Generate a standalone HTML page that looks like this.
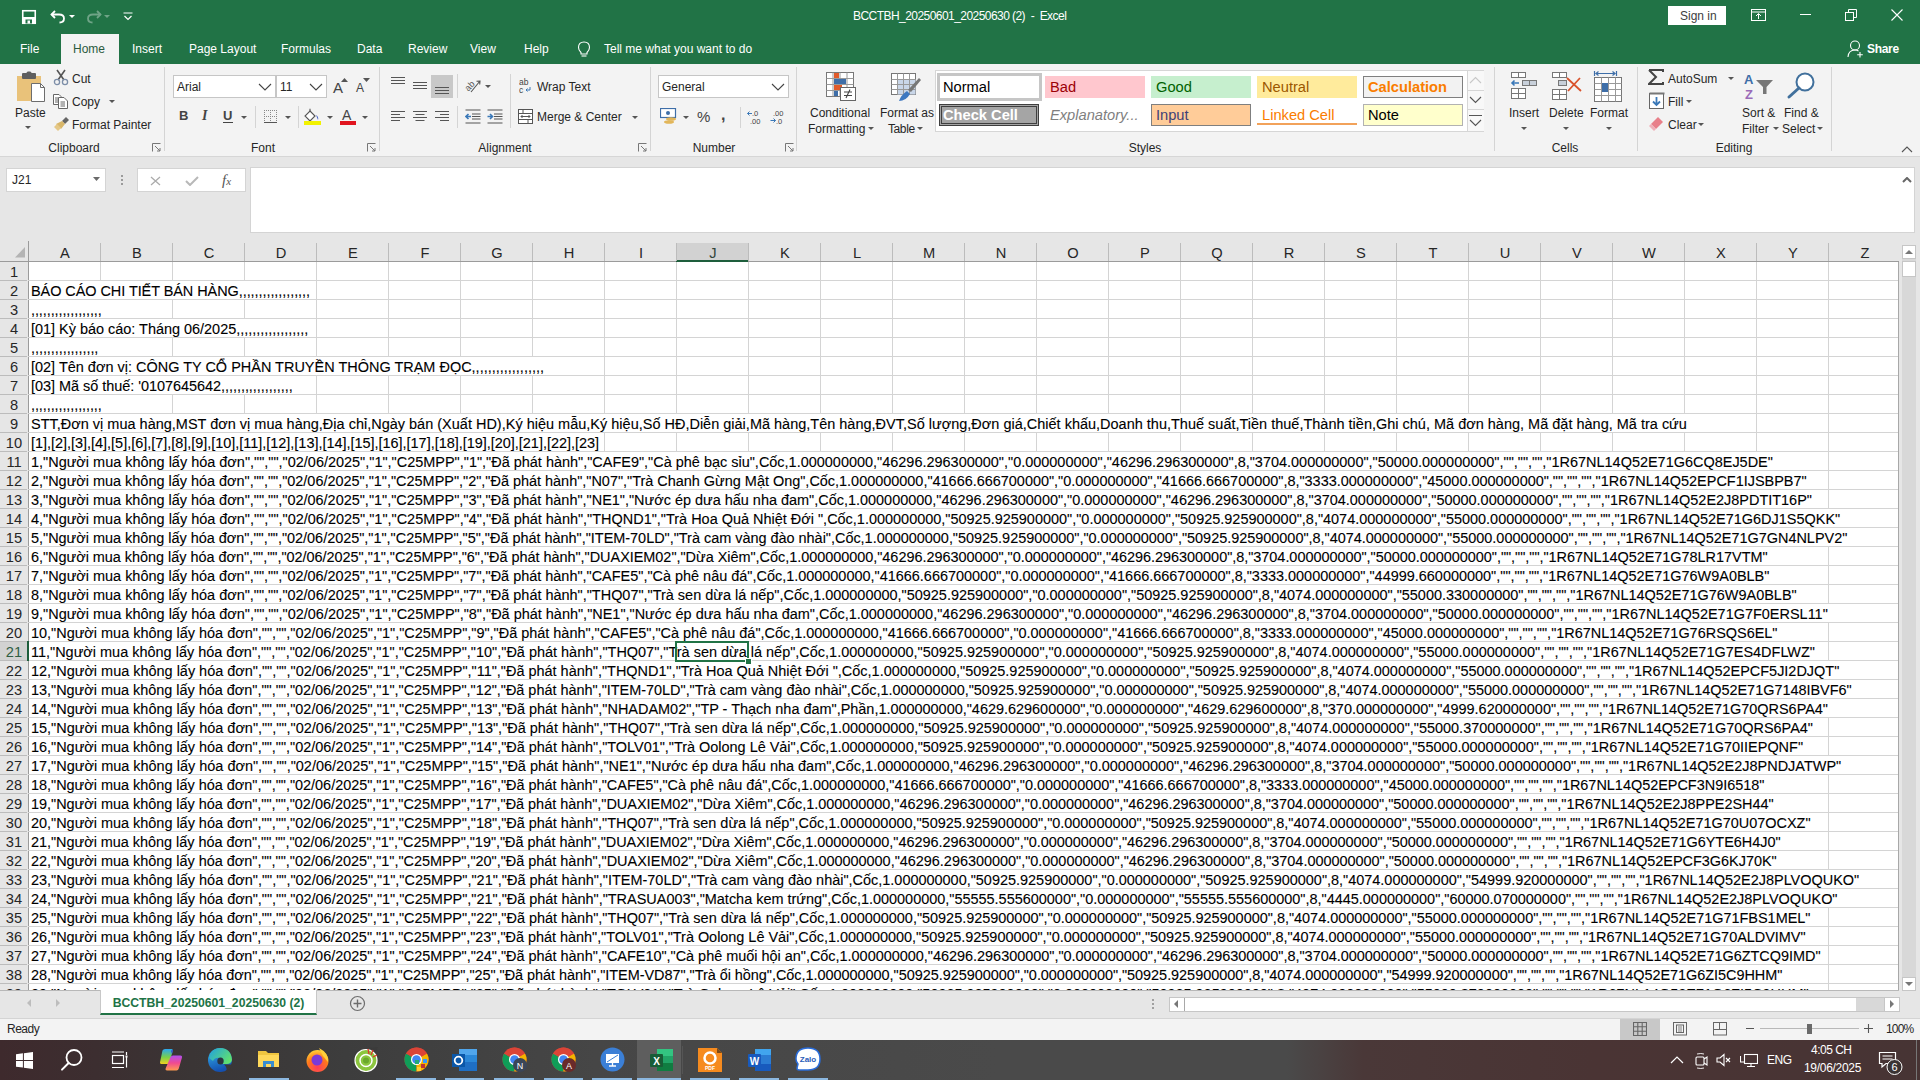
<!DOCTYPE html>
<html><head><meta charset="utf-8"><style>
html,body{margin:0;padding:0}
body{width:1920px;height:1080px;overflow:hidden;position:relative;font-family:"Liberation Sans",sans-serif;background:#fff}
.rt{-webkit-text-stroke:0.1px #000}
</style></head><body>
<div style="position:absolute;left:0px;top:0px;width:1920px;height:64px;background:#217346"></div>
<div style="position:absolute;left:853px;top:9px;white-space:pre;color:#fff;font-size:12px;line-height:14px;letter-spacing:-0.55px">BCCTBH_20250601_20250630 (2)  -  Excel</div>
<div style="position:absolute;left:20px;top:42px;white-space:pre;color:#fff;font-size:12px;line-height:14px">File</div>
<div style="position:absolute;left:132px;top:42px;white-space:pre;color:#fff;font-size:12px;line-height:14px">Insert</div>
<div style="position:absolute;left:189px;top:42px;white-space:pre;color:#fff;font-size:12px;line-height:14px">Page Layout</div>
<div style="position:absolute;left:281px;top:42px;white-space:pre;color:#fff;font-size:12px;line-height:14px">Formulas</div>
<div style="position:absolute;left:357px;top:42px;white-space:pre;color:#fff;font-size:12px;line-height:14px">Data</div>
<div style="position:absolute;left:408px;top:42px;white-space:pre;color:#fff;font-size:12px;line-height:14px">Review</div>
<div style="position:absolute;left:470px;top:42px;white-space:pre;color:#fff;font-size:12px;line-height:14px">View</div>
<div style="position:absolute;left:524px;top:42px;white-space:pre;color:#fff;font-size:12px;line-height:14px">Help</div>
<div style="position:absolute;left:61px;top:34px;width:58px;height:30px;background:#f3f3f3"></div>
<div style="position:absolute;left:73px;top:42px;white-space:pre;color:#2b5a3e;font-size:12px;line-height:14px">Home</div>
<div style="position:absolute;left:604px;top:42px;white-space:pre;color:#fff;font-size:12px;line-height:14px">Tell me what you want to do</div>
<div style="position:absolute;left:1867px;top:42px;white-space:pre;color:#fff;font-size:12px;line-height:14px;font-weight:bold;letter-spacing:-0.3px">Share</div>
<div style="position:absolute;left:1668px;top:6px;width:58px;height:19px;background:#fff"></div>
<div style="position:absolute;left:1680px;top:9px;white-space:pre;color:#404040;font-size:12px;line-height:14px">Sign in</div>
<svg style="position:absolute;left:21px;top:9px;" width="16" height="16" viewBox="0 0 16 16"><rect x="1.75" y="1.75" width="12.5" height="12.5" fill="none" stroke="#fff" stroke-width="1.6"/><rect x="1.5" y="8" width="13" height="6.5" fill="#fff"/><rect x="4.5" y="10.5" width="6.5" height="4" fill="#217346"/><rect x="6.5" y="11.5" width="2.5" height="3" fill="#fff"/></svg>
<svg style="position:absolute;left:50px;top:9px;" width="16" height="15" viewBox="0 0 16 15"><path d="M5 2 L1.5 5.5 L5 9" stroke="#fff" stroke-width="1.8" fill="none"/><path d="M1.5 5.5 H9 Q14 5.5 14 9.5 Q14 13.5 9.5 13.5" stroke="#fff" stroke-width="1.8" fill="none"/></svg>
<svg style="position:absolute;left:69px;top:15px;" width="7" height="4" viewBox="0 0 7 4"><path d="M0 0 H6 L3 3 Z" fill="#fff"/></svg>
<svg style="position:absolute;left:86px;top:9px;opacity:0.35" width="16" height="15" viewBox="0 0 16 15"><path d="M11 2 L14.5 5.5 L11 9" stroke="#fff" stroke-width="1.8" fill="none"/><path d="M14.5 5.5 H7 Q2 5.5 2 9.5 Q2 13.5 6.5 13.5" stroke="#fff" stroke-width="1.8" fill="none"/></svg>
<svg style="position:absolute;left:104px;top:15px;opacity:0.35" width="7" height="4" viewBox="0 0 7 4"><path d="M0 0 H6 L3 3 Z" fill="#fff"/></svg>
<svg style="position:absolute;left:123px;top:12px;" width="10" height="9" viewBox="0 0 10 9"><path d="M0.5 1 H9.5" stroke="#fff" stroke-width="1"/><path d="M1.5 4 L5 7.5 L8.5 4" stroke="#fff" stroke-width="1.2" fill="none"/></svg>
<svg style="position:absolute;left:1751px;top:9px;" width="15" height="12" viewBox="0 0 15 12"><rect x="0.5" y="0.5" width="14" height="11" fill="none" stroke="#fff" stroke-width="1"/><path d="M0.5 3 H14.5" stroke="#fff" stroke-width="1"/><path d="M7.5 10 V5 M5 7 L7.5 4.5 L10 7" stroke="#fff" stroke-width="1" fill="none"/></svg>
<div style="position:absolute;left:1800px;top:14px;width:11px;height:1px;background:#fff"></div>
<svg style="position:absolute;left:1845px;top:9px;" width="12" height="12" viewBox="0 0 12 12"><rect x="0.5" y="3.5" width="8" height="8" fill="none" stroke="#fff" stroke-width="1"/><path d="M3.5 3.5 V0.5 H11.5 V8.5 H8.5" stroke="#fff" stroke-width="1" fill="none"/></svg>
<svg style="position:absolute;left:1891px;top:9px;" width="12" height="12" viewBox="0 0 12 12"><path d="M0.5 0.5 L11.5 11.5 M11.5 0.5 L0.5 11.5" stroke="#fff" stroke-width="1.1"/></svg>
<svg style="position:absolute;left:1847px;top:40px;" width="17" height="18" viewBox="0 0 17 18"><circle cx="8" cy="5.5" r="4.5" fill="none" stroke="#fff" stroke-width="1.1"/><path d="M1 17 Q1.5 10 8 10 Q10 10 11.5 11" stroke="#fff" stroke-width="1.1" fill="none"/><path d="M13 12 V17.5 M10.2 14.7 H15.8" stroke="#fff" stroke-width="1.1"/></svg>
<svg style="position:absolute;left:577px;top:41px;" width="14" height="17" viewBox="0 0 14 17"><path d="M7 1 Q12.5 1 12.5 6.5 Q12.5 9 10 11.5 V13 H4 V11.5 Q1.5 9 1.5 6.5 Q1.5 1 7 1 Z" fill="none" stroke="#fff" stroke-width="1.1"/><path d="M4.5 15 H9.5" stroke="#fff" stroke-width="1.1"/></svg>
<div style="position:absolute;left:0px;top:64px;width:1920px;height:93px;background:#f3f3f3;border-bottom:1px solid #d6d6d6;box-sizing:border-box"></div>
<div style="position:absolute;left:14px;top:141px;width:120px;text-align:center;color:#262626;font-size:12px;line-height:14px">Clipboard</div>
<div style="position:absolute;left:203px;top:141px;width:120px;text-align:center;color:#262626;font-size:12px;line-height:14px">Font</div>
<div style="position:absolute;left:445px;top:141px;width:120px;text-align:center;color:#262626;font-size:12px;line-height:14px">Alignment</div>
<div style="position:absolute;left:654px;top:141px;width:120px;text-align:center;color:#262626;font-size:12px;line-height:14px">Number</div>
<div style="position:absolute;left:1085px;top:141px;width:120px;text-align:center;color:#262626;font-size:12px;line-height:14px">Styles</div>
<div style="position:absolute;left:1505px;top:141px;width:120px;text-align:center;color:#262626;font-size:12px;line-height:14px">Cells</div>
<div style="position:absolute;left:1674px;top:141px;width:120px;text-align:center;color:#262626;font-size:12px;line-height:14px">Editing</div>
<div style="position:absolute;left:164px;top:67px;width:1px;height:84px;background:#d4d4d4"></div>
<div style="position:absolute;left:379px;top:67px;width:1px;height:84px;background:#d4d4d4"></div>
<div style="position:absolute;left:650px;top:67px;width:1px;height:84px;background:#d4d4d4"></div>
<div style="position:absolute;left:796px;top:67px;width:1px;height:84px;background:#d4d4d4"></div>
<div style="position:absolute;left:1494px;top:67px;width:1px;height:84px;background:#d4d4d4"></div>
<div style="position:absolute;left:1637px;top:67px;width:1px;height:84px;background:#d4d4d4"></div>
<div style="position:absolute;left:1831px;top:67px;width:1px;height:84px;background:#d4d4d4"></div>
<svg style="position:absolute;left:14px;top:70px;" width="34" height="34" viewBox="0 0 34 34"><rect x="3" y="6" width="24" height="25" fill="#e9c27a"/><rect x="8" y="3" width="14" height="6" rx="1" fill="#5f5f5f"/><rect x="12.5" y="1.5" width="5" height="3" rx="1.5" fill="#5f5f5f"/><path d="M17.5 13.5 H26.5 L30.5 17.5 V31.5 H17.5 Z" fill="#fff" stroke="#6d6d6d" stroke-width="1"/><path d="M26.5 13.5 V17.5 H30.5" fill="none" stroke="#6d6d6d" stroke-width="1"/></svg>
<div style="position:absolute;left:15px;top:106px;white-space:pre;color:#262626;font-size:12px;line-height:14px;font-size:12px">Paste</div>
<svg style="position:absolute;left:25px;top:126px;" width="7" height="4" viewBox="0 0 7 4"><path d="M0 0 H6 L3 3 Z" fill="#555"/></svg>
<svg style="position:absolute;left:53px;top:69px;" width="16" height="17" viewBox="0 0 16 17"><path d="M4 1 L11 11 M12 1 L5 11" stroke="#555" stroke-width="1.6" fill="none"/><circle cx="4" cy="13" r="2.6" fill="none" stroke="#7d8ea8" stroke-width="1.3"/><circle cx="12" cy="13" r="2.6" fill="none" stroke="#7d8ea8" stroke-width="1.3"/></svg>
<div style="position:absolute;left:72px;top:72px;white-space:pre;color:#262626;font-size:12px;line-height:14px">Cut</div>
<svg style="position:absolute;left:52px;top:93px;" width="17" height="16" viewBox="0 0 17 16"><path d="M1.5 1.5 H7 L9 3.5 V11.5 H1.5 Z" fill="#fff" stroke="#666" stroke-width="1"/><path d="M3 5 H6 M3 7 H7 M3 9 H7" stroke="#666" stroke-width="1"/><path d="M6.5 4.5 H12 L15.5 8 V15.5 H6.5 Z" fill="#fff" stroke="#666" stroke-width="1"/><path d="M8.5 9 H13 M8.5 11 H13 M8.5 13 H13" stroke="#666" stroke-width="1"/></svg>
<div style="position:absolute;left:72px;top:95px;white-space:pre;color:#262626;font-size:12px;line-height:14px">Copy</div>
<svg style="position:absolute;left:109px;top:100px;" width="7" height="4" viewBox="0 0 7 4"><path d="M0 0 H6 L3 3 Z" fill="#555"/></svg>
<svg style="position:absolute;left:53px;top:116px;" width="17" height="15" viewBox="0 0 17 15"><path d="M9 5 L13 1 L16 4 L12 8 Z" fill="#666"/><path d="M3 8 L9 5 L12 8 L8 13 Z" fill="#d9b76a"/><path d="M1 11 L4 8 L8 12 L5 15 Z" fill="#e5c887"/></svg>
<div style="position:absolute;left:72px;top:118px;white-space:pre;color:#262626;font-size:12px;line-height:14px">Format Painter</div>
<svg style="position:absolute;left:152px;top:143px;" width="9" height="9" viewBox="0 0 9 9"><path d="M0.5 0.5 H8.5 M0.5 0.5 V8.5" stroke="#777" stroke-width="1" fill="none"/><path d="M3 3 L8 8 M8 5 V8 H5" stroke="#777" stroke-width="1" fill="none"/></svg>
<div style="position:absolute;left:173px;top:75px;width:103px;height:23px;background:#fff;border:1px solid #c6c6c6;box-sizing:border-box"></div>
<div style="position:absolute;left:276px;top:75px;width:51px;height:23px;background:#fff;border:1px solid #c6c6c6;box-sizing:border-box"></div>
<div style="position:absolute;left:177px;top:80px;white-space:pre;color:#262626;font-size:12px;line-height:15px">Arial</div>
<div style="position:absolute;left:280px;top:80px;white-space:pre;color:#262626;font-size:12px;line-height:15px">11</div>
<svg style="position:absolute;left:258px;top:83px;" width="14" height="9" viewBox="0 0 14 9"><path d="M1 1 L7 7 L13 1" stroke="#444" stroke-width="1.1" fill="none"/></svg>
<svg style="position:absolute;left:309px;top:83px;" width="14" height="9" viewBox="0 0 14 9"><path d="M1 1 L7 7 L13 1" stroke="#444" stroke-width="1.1" fill="none"/></svg>
<div style="position:absolute;left:333px;top:80px;white-space:pre;color:#444;font-size:15px;line-height:15px">A</div>
<svg style="position:absolute;left:341px;top:78px;" width="7" height="4" viewBox="0 0 7 4"><path d="M0 4 L3.5 0 L7 4 Z" fill="#555"/></svg>
<div style="position:absolute;left:356px;top:82px;white-space:pre;color:#444;font-size:12px;line-height:13px">A</div>
<svg style="position:absolute;left:363px;top:78px;" width="7" height="4" viewBox="0 0 7 4"><path d="M0 0 L7 0 L3.5 4 Z" fill="#555"/></svg>
<div style="position:absolute;left:179px;top:108px;white-space:pre;color:#444;font-size:13px;font-weight:bold;line-height:15px">B</div>
<div style="position:absolute;left:202px;top:108px;white-space:pre;color:#444;font-size:14px;font-style:italic;font-family:Liberation Serif;font-weight:bold;line-height:15px">I</div>
<div style="position:absolute;left:223px;top:108px;white-space:pre;color:#444;font-size:13px;font-weight:bold;line-height:15px">U</div>
<div style="position:absolute;left:223px;top:122px;width:10px;height:1px;background:#444"></div>
<svg style="position:absolute;left:241px;top:116px;" width="7" height="4" viewBox="0 0 7 4"><path d="M0 0 H6 L3 3 Z" fill="#555"/></svg>
<div style="position:absolute;left:255px;top:106px;width:1px;height:22px;background:#d4d4d4"></div>
<svg style="position:absolute;left:264px;top:110px;" width="13" height="13" viewBox="0 0 13 13"><path d="M0 0.5 H13 M0.5 0 V13 M12.5 0 V13 M6.5 0 V13 M0 6.5 H13" stroke="#888" stroke-width="1" stroke-dasharray="1 1" fill="none"/><path d="M0 12.5 H13" stroke="#555" stroke-width="1"/></svg>
<svg style="position:absolute;left:285px;top:116px;" width="7" height="4" viewBox="0 0 7 4"><path d="M0 0 H6 L3 3 Z" fill="#555"/></svg>
<div style="position:absolute;left:298px;top:106px;width:1px;height:22px;background:#d4d4d4"></div>
<svg style="position:absolute;left:304px;top:108px;" width="19" height="17" viewBox="0 0 19 17"><path d="M6 3 L11 8 L6 13 L1 8 Z" fill="#fff" stroke="#555" stroke-width="1.1"/><path d="M6 3 V0.8" stroke="#555" stroke-width="1.1"/><path d="M12 7 Q15 9 14 12 Z" fill="#4a64c8"/><rect x="0" y="13" width="17" height="4" fill="#f2f200"/></svg>
<svg style="position:absolute;left:327px;top:116px;" width="7" height="4" viewBox="0 0 7 4"><path d="M0 0 H6 L3 3 Z" fill="#555"/></svg>
<div style="position:absolute;left:342px;top:108px;white-space:pre;color:#444;font-size:14px;line-height:14px">A</div>
<div style="position:absolute;left:340px;top:121px;width:16px;height:4px;background:#e0141e"></div>
<svg style="position:absolute;left:362px;top:116px;" width="7" height="4" viewBox="0 0 7 4"><path d="M0 0 H6 L3 3 Z" fill="#555"/></svg>
<svg style="position:absolute;left:367px;top:143px;" width="9" height="9" viewBox="0 0 9 9"><path d="M0.5 0.5 H8.5 M0.5 0.5 V8.5" stroke="#777" stroke-width="1" fill="none"/><path d="M3 3 L8 8 M8 5 V8 H5" stroke="#777" stroke-width="1" fill="none"/></svg>
<svg style="position:absolute;left:391px;top:77px;" width="14" height="11" viewBox="0 0 14 11"><path d="M0 0.5 H14" stroke="#555" stroke-width="1"/><path d="M0 3.5 H14" stroke="#555" stroke-width="1"/><path d="M0 6.5 H14" stroke="#555" stroke-width="1"/></svg>
<svg style="position:absolute;left:413px;top:82px;" width="14" height="11" viewBox="0 0 14 11"><path d="M0 0.5 H14" stroke="#555" stroke-width="1"/><path d="M0 3.5 H14" stroke="#555" stroke-width="1"/><path d="M0 6.5 H14" stroke="#555" stroke-width="1"/></svg>
<div style="position:absolute;left:431px;top:75px;width:22px;height:23px;background:#c8c8c8"></div>
<svg style="position:absolute;left:435px;top:87px;" width="14" height="11" viewBox="0 0 14 11"><path d="M0 0.5 H14" stroke="#555" stroke-width="1"/><path d="M0 3.5 H14" stroke="#555" stroke-width="1"/><path d="M0 6.5 H14" stroke="#555" stroke-width="1"/></svg>
<svg style="position:absolute;left:391px;top:111px;" width="14" height="14" viewBox="0 0 14 14"><path d="M0 0.5 H14" stroke="#555" stroke-width="1"/><path d="M0 3.5 H9" stroke="#555" stroke-width="1"/><path d="M0 6.5 H14" stroke="#555" stroke-width="1"/><path d="M0 9.5 H9" stroke="#555" stroke-width="1"/></svg>
<svg style="position:absolute;left:413px;top:111px;" width="14" height="14" viewBox="0 0 14 14"><path d="M0.0 0.5 H14.0" stroke="#555" stroke-width="1"/><path d="M2.5 3.5 H11.5" stroke="#555" stroke-width="1"/><path d="M0.0 6.5 H14.0" stroke="#555" stroke-width="1"/><path d="M2.5 9.5 H11.5" stroke="#555" stroke-width="1"/></svg>
<svg style="position:absolute;left:435px;top:111px;" width="14" height="14" viewBox="0 0 14 14"><path d="M0 0.5 H14" stroke="#555" stroke-width="1"/><path d="M5 3.5 H14" stroke="#555" stroke-width="1"/><path d="M0 6.5 H14" stroke="#555" stroke-width="1"/><path d="M5 9.5 H14" stroke="#555" stroke-width="1"/></svg>
<div style="position:absolute;left:457px;top:74px;width:1px;height:24px;background:#d4d4d4"></div>
<div style="position:absolute;left:457px;top:106px;width:1px;height:22px;background:#d4d4d4"></div>
<svg style="position:absolute;left:465px;top:78px;" width="16" height="15" viewBox="0 0 16 15"><text x="0" y="10" transform="rotate(-45 6 8)" font-size="9" font-family="Liberation Sans" fill="#555">ab</text><path d="M6 14 L15 3 M11.5 3.3 L15 3 L14.7 6.5" stroke="#555" stroke-width="1.1" fill="none"/></svg>
<svg style="position:absolute;left:485px;top:85px;" width="7" height="4" viewBox="0 0 7 4"><path d="M0 0 H6 L3 3 Z" fill="#555"/></svg>
<svg style="position:absolute;left:465px;top:109px;" width="16" height="15" viewBox="0 0 16 15"><path d="M0.5 1 H15.5 M0.5 14 H15.5 M7 5 H15.5 M7 7.5 H15.5 M7 10 H15.5" stroke="#555" stroke-width="1.1"/><path d="M1 7.5 H6 M3.5 5 L1 7.5 L3.5 10" stroke="#3a78b8" stroke-width="1.6" fill="none"/></svg>
<svg style="position:absolute;left:487px;top:109px;" width="16" height="15" viewBox="0 0 16 15"><path d="M0.5 1 H15.5 M0.5 14 H15.5 M7 5 H15.5 M7 7.5 H15.5 M7 10 H15.5" stroke="#555" stroke-width="1.1"/><path d="M0.5 7.5 H5.5 M3 5 L5.5 7.5 L3 10" stroke="#3a78b8" stroke-width="1.6" fill="none"/></svg>
<div style="position:absolute;left:510px;top:74px;width:1px;height:54px;background:#d4d4d4"></div>
<svg style="position:absolute;left:519px;top:78px;" width="14" height="16" viewBox="0 0 14 16"><text x="0" y="7" font-size="8.5" font-family="Liberation Sans" fill="#444">ab</text><text x="0" y="14.5" font-size="8.5" font-family="Liberation Sans" fill="#444">c</text><path d="M11 9 V12 H7 M8.5 10.5 L7 12 L8.5 13.5" stroke="#3a78b8" stroke-width="1" fill="none"/></svg>
<div style="position:absolute;left:537px;top:80px;white-space:pre;color:#262626;font-size:12px;line-height:14px">Wrap Text</div>
<svg style="position:absolute;left:518px;top:109px;" width="15" height="15" viewBox="0 0 15 15"><rect x="0.5" y="0.5" width="14" height="14" fill="#fff" stroke="#555" stroke-width="1"/><path d="M0.5 4.5 H14.5 M0.5 10.5 H14.5 M5 0.5 V4.5 M10 10.5 V14.5 M3 7.5 H12 M4.5 6 L3 7.5 L4.5 9 M10.5 6 L12 7.5 L10.5 9" stroke="#555" stroke-width="1" fill="none"/></svg>
<div style="position:absolute;left:537px;top:110px;white-space:pre;color:#262626;font-size:12px;line-height:14px">Merge &amp; Center</div>
<svg style="position:absolute;left:632px;top:116px;" width="7" height="4" viewBox="0 0 7 4"><path d="M0 0 H6 L3 3 Z" fill="#555"/></svg>
<svg style="position:absolute;left:638px;top:143px;" width="9" height="9" viewBox="0 0 9 9"><path d="M0.5 0.5 H8.5 M0.5 0.5 V8.5" stroke="#777" stroke-width="1" fill="none"/><path d="M3 3 L8 8 M8 5 V8 H5" stroke="#777" stroke-width="1" fill="none"/></svg>
<div style="position:absolute;left:658px;top:75px;width:131px;height:23px;background:#fff;border:1px solid #c6c6c6;box-sizing:border-box"></div>
<div style="position:absolute;left:662px;top:80px;white-space:pre;color:#262626;font-size:12px;line-height:15px">General</div>
<svg style="position:absolute;left:771px;top:83px;" width="14" height="9" viewBox="0 0 14 9"><path d="M1 1 L7 7 L13 1" stroke="#444" stroke-width="1.1" fill="none"/></svg>
<svg style="position:absolute;left:660px;top:108px;" width="18" height="17" viewBox="0 0 18 17"><rect x="0.5" y="0.5" width="15" height="9" fill="#fff" stroke="#3e6ea8" stroke-width="1.2"/><circle cx="8" cy="5" r="2" fill="#3e6ea8"/><ellipse cx="11" cy="11" rx="5" ry="1.8" fill="#e2b65a"/><ellipse cx="9" cy="14" rx="5" ry="1.8" fill="#e2b65a"/></svg>
<svg style="position:absolute;left:683px;top:116px;" width="7" height="4" viewBox="0 0 7 4"><path d="M0 0 H6 L3 3 Z" fill="#555"/></svg>
<div style="position:absolute;left:697px;top:109px;white-space:pre;color:#444;font-size:15px;line-height:16px">%</div>
<div style="position:absolute;left:721px;top:107px;white-space:pre;color:#444;font-size:16px;font-weight:bold;line-height:16px">,</div>
<div style="position:absolute;left:740px;top:107px;width:1px;height:21px;background:#d4d4d4"></div>
<svg style="position:absolute;left:747px;top:110px;" width="16" height="14" viewBox="0 0 16 14"><text x="5" y="6" font-size="7.5" font-family="Liberation Sans" fill="#444">.0</text><text x="3" y="13.5" font-size="7.5" font-family="Liberation Sans" fill="#444">.00</text><path d="M0.5 3.5 H5 M2.5 1.5 L0.5 3.5 L2.5 5.5" stroke="#3a78b8" stroke-width="1" fill="none"/></svg>
<svg style="position:absolute;left:770px;top:110px;" width="16" height="14" viewBox="0 0 16 14"><text x="3" y="6" font-size="7.5" font-family="Liberation Sans" fill="#444">.00</text><text x="6" y="13.5" font-size="7.5" font-family="Liberation Sans" fill="#444">.0</text><path d="M0.5 10.5 H5.5 M3.5 8.5 L5.5 10.5 L3.5 12.5" stroke="#3a78b8" stroke-width="1" fill="none"/></svg>
<svg style="position:absolute;left:785px;top:143px;" width="9" height="9" viewBox="0 0 9 9"><path d="M0.5 0.5 H8.5 M0.5 0.5 V8.5" stroke="#777" stroke-width="1" fill="none"/><path d="M3 3 L8 8 M8 5 V8 H5" stroke="#777" stroke-width="1" fill="none"/></svg>
<svg style="position:absolute;left:826px;top:72px;" width="31" height="30" viewBox="0 0 31 30"><rect x="0.5" y="0.5" width="27" height="24" fill="#fff" stroke="#777" stroke-width="1"/><path d="M7 0.5 V24.5 M14 0.5 V24.5 M21 0.5 V24.5 M0.5 6.5 H27.5 M0.5 12.5 H27.5 M0.5 18.5 H27.5" stroke="#999" stroke-width="1"/><rect x="8" y="1" width="5" height="5" fill="#e05a2a"/><rect x="8" y="7" width="12" height="5" fill="#3e6ea8"/><rect x="8" y="13" width="8" height="5" fill="#e05a2a"/><rect x="8" y="19" width="4" height="5" fill="#3e6ea8"/><rect x="14.5" y="15.5" width="15" height="13" fill="#fff" stroke="#666" stroke-width="1"/><path d="M18 20 H26 M18 23.5 H26 M24 17.5 L20 26" stroke="#444" stroke-width="1.1"/></svg>
<div style="position:absolute;left:810px;top:106px;white-space:pre;color:#262626;font-size:12px;line-height:14px">Conditional</div>
<div style="position:absolute;left:808px;top:122px;white-space:pre;color:#262626;font-size:12px;line-height:14px">Formatting</div>
<svg style="position:absolute;left:868px;top:127px;" width="7" height="4" viewBox="0 0 7 4"><path d="M0 0 H6 L3 3 Z" fill="#555"/></svg>
<svg style="position:absolute;left:891px;top:73px;" width="31" height="29" viewBox="0 0 31 29"><rect x="0.5" y="0.5" width="24" height="21" fill="#fff" stroke="#777" stroke-width="1"/><rect x="6.5" y="6.5" width="18" height="15" fill="#c9d6e8"/><path d="M6.5 0.5 V21.5 M12.5 0.5 V21.5 M18.5 0.5 V21.5 M0.5 6.5 H24.5 M0.5 11.5 H24.5 M0.5 16.5 H24.5" stroke="#999" stroke-width="1"/><path d="M28 5 L30 7 L20 19 L17 17 Z" fill="#777"/><path d="M16 18 L19 21 Q15 28 8 28 Q10 22 16 18 Z" fill="#3e78c0"/></svg>
<div style="position:absolute;left:880px;top:106px;white-space:pre;color:#262626;font-size:12px;line-height:14px">Format as</div>
<div style="position:absolute;left:888px;top:122px;white-space:pre;color:#262626;font-size:12px;line-height:14px;letter-spacing:-0.4px">Table</div>
<svg style="position:absolute;left:917px;top:127px;" width="7" height="4" viewBox="0 0 7 4"><path d="M0 0 H6 L3 3 Z" fill="#555"/></svg>
<div style="position:absolute;left:935px;top:70px;width:549px;height:62px;background:#fff;border:1px solid #d6d6d6;box-sizing:border-box"></div>
<div style="position:absolute;left:937px;top:73px;width:105px;height:28px;box-sizing:border-box;border:3px solid #c6c6c6;background:#fff"></div>
<div style="position:absolute;left:942px;top:76px;white-space:pre;font-size:14.67px;line-height:16px;"></div>
<div style="position:absolute;left:943px;top:79px;white-space:pre;font-size:14.67px;line-height:16px;color:#000">Normal</div>
<div style="position:absolute;left:1045px;top:76px;width:100px;height:22px;box-sizing:border-box;background:#ffc7ce"></div>
<div style="position:absolute;left:1050px;top:79px;white-space:pre;font-size:14.67px;line-height:16px;"></div>
<div style="position:absolute;left:1050px;top:79px;white-space:pre;font-size:14.67px;line-height:16px;color:#9c0006">Bad</div>
<div style="position:absolute;left:1151px;top:76px;width:100px;height:22px;box-sizing:border-box;background:#c6efce"></div>
<div style="position:absolute;left:1156px;top:79px;white-space:pre;font-size:14.67px;line-height:16px;"></div>
<div style="position:absolute;left:1156px;top:79px;white-space:pre;font-size:14.67px;line-height:16px;color:#006100">Good</div>
<div style="position:absolute;left:1257px;top:76px;width:100px;height:22px;box-sizing:border-box;background:#ffeb9c"></div>
<div style="position:absolute;left:1262px;top:79px;white-space:pre;font-size:14.67px;line-height:16px;"></div>
<div style="position:absolute;left:1262px;top:79px;white-space:pre;font-size:14.67px;line-height:16px;color:#9c5700">Neutral</div>
<div style="position:absolute;left:1363px;top:76px;width:100px;height:22px;box-sizing:border-box;background:#f2f2f2;border:1px solid #7f7f7f"></div>
<div style="position:absolute;left:1368px;top:79px;white-space:pre;font-size:14.67px;line-height:16px;"></div>
<div style="position:absolute;left:1368px;top:79px;white-space:pre;font-size:14.67px;line-height:16px;color:#fa7d00;font-weight:bold">Calculation</div>
<div style="position:absolute;left:939px;top:104px;width:100px;height:22px;box-sizing:border-box;background:#a5a5a5;border:3px double #3f3f3f"></div>
<div style="position:absolute;left:944px;top:107px;white-space:pre;font-size:14.67px;line-height:16px;"></div>
<div style="position:absolute;left:943px;top:107px;white-space:pre;font-size:14.67px;line-height:16px;color:#fff;font-weight:bold">Check Cell</div>
<div style="position:absolute;left:1050px;top:107px;white-space:pre;font-size:14.67px;line-height:16px;color:#7f7f7f;font-style:italic">Explanatory...</div>
<div style="position:absolute;left:1151px;top:104px;width:100px;height:22px;box-sizing:border-box;background:#ffcc99;border:1px solid #7f7f7f"></div>
<div style="position:absolute;left:1156px;top:107px;white-space:pre;font-size:14.67px;line-height:16px;"></div>
<div style="position:absolute;left:1156px;top:107px;white-space:pre;font-size:14.67px;line-height:16px;color:#3f3f76">Input</div>
<div style="position:absolute;left:1262px;top:107px;white-space:pre;font-size:14.67px;line-height:16px;color:#fa7d00">Linked Cell</div>
<div style="position:absolute;left:1257px;top:123px;width:100px;height:2px;background:#f2a25a"></div>
<div style="position:absolute;left:1363px;top:104px;width:100px;height:22px;box-sizing:border-box;background:#ffffcc;border:1px solid #b2b2b2"></div>
<div style="position:absolute;left:1368px;top:107px;white-space:pre;font-size:14.67px;line-height:16px;"></div>
<div style="position:absolute;left:1368px;top:107px;white-space:pre;font-size:14.67px;line-height:16px;color:#000">Note</div>
<div style="position:absolute;left:1467px;top:71px;width:17px;height:60px;background:#f8f8f8;border-left:1px solid #d6d6d6;box-sizing:border-box"></div>
<div style="position:absolute;left:1467px;top:90px;width:17px;height:1px;background:#d6d6d6"></div>
<div style="position:absolute;left:1467px;top:109px;width:17px;height:1px;background:#d6d6d6"></div>
<svg style="position:absolute;left:1469px;top:76px;" width="13" height="8" viewBox="0 0 13 8"><path d="M1 7 L6.5 1.5 L12 7" stroke="#c8c8c8" stroke-width="1.1" fill="none"/></svg>
<svg style="position:absolute;left:1469px;top:96px;" width="13" height="8" viewBox="0 0 13 8"><path d="M1 1 L6.5 6.5 L12 1" stroke="#555" stroke-width="1.1" fill="none"/></svg>
<div style="position:absolute;left:1469px;top:115px;width:13px;height:1px;background:#555"></div>
<svg style="position:absolute;left:1469px;top:119px;" width="13" height="8" viewBox="0 0 13 8"><path d="M1 1 L6.5 6.5 L12 1" stroke="#555" stroke-width="1.1" fill="none"/></svg>
<svg style="position:absolute;left:1510px;top:71px;" width="28" height="29" viewBox="0 0 28 29"><rect x="1.5" y="1.5" width="14" height="5" fill="#fff" stroke="#777"/><path d="M8.5 1.5 V6.5" stroke="#777"/><path d="M2 12 H9 M4.5 9.5 L2 12 L4.5 14.5" stroke="#3a78b8" stroke-width="1.6" fill="none"/><rect x="12.5" y="9.5" width="14" height="5" fill="#c8d0da" stroke="#777"/><path d="M19.5 9.5 V14.5" stroke="#777"/><rect x="1.5" y="17.5" width="14" height="10" fill="#fff" stroke="#777"/><path d="M8.5 17.5 V27.5 M1.5 22.5 H15.5" stroke="#777"/></svg>
<div style="position:absolute;left:1509px;top:106px;white-space:pre;color:#262626;font-size:12px;line-height:14px">Insert</div>
<svg style="position:absolute;left:1521px;top:127px;" width="7" height="4" viewBox="0 0 7 4"><path d="M0 0 H6 L3 3 Z" fill="#555"/></svg>
<svg style="position:absolute;left:1551px;top:71px;" width="32" height="30" viewBox="0 0 32 30"><rect x="1.5" y="1.5" width="14" height="5" fill="#fff" stroke="#777"/><path d="M8.5 1.5 V6.5" stroke="#777"/><rect x="7.5" y="9.5" width="8" height="5" fill="#c8d0da" stroke="#777"/><rect x="1.5" y="18.5" width="14" height="10" fill="#fff" stroke="#777"/><path d="M8.5 18.5 V28.5 M1.5 23.5 H15.5" stroke="#777"/><path d="M16 7 L30 20 M29 7 L17 20" stroke="#d9532c" stroke-width="1.8"/></svg>
<div style="position:absolute;left:1549px;top:106px;white-space:pre;color:#262626;font-size:12px;line-height:14px">Delete</div>
<svg style="position:absolute;left:1563px;top:127px;" width="7" height="4" viewBox="0 0 7 4"><path d="M0 0 H6 L3 3 Z" fill="#555"/></svg>
<svg style="position:absolute;left:1593px;top:70px;" width="30" height="32" viewBox="0 0 30 32"><path d="M1.5 1 V6 M23.5 1 V6 M3 3.5 H22 M5.5 1.5 L3 3.5 L5.5 5.5 M19.5 1.5 L22 3.5 L19.5 5.5" stroke="#3e6ea8" stroke-width="1.2" fill="none"/><rect x="1.5" y="7.5" width="27" height="24" fill="#fff" stroke="#777"/><path d="M8.5 7.5 V31.5 M15.5 7.5 V31.5 M22.5 7.5 V31.5 M1.5 13.5 H28.5 M1.5 19.5 H28.5 M1.5 25.5 H28.5" stroke="#999"/><rect x="9" y="13" width="6" height="9" fill="#3e6ea8"/></svg>
<div style="position:absolute;left:1590px;top:106px;white-space:pre;color:#262626;font-size:12px;line-height:14px">Format</div>
<svg style="position:absolute;left:1606px;top:127px;" width="7" height="4" viewBox="0 0 7 4"><path d="M0 0 H6 L3 3 Z" fill="#555"/></svg>
<svg style="position:absolute;left:1648px;top:69px;" width="17" height="17" viewBox="0 0 17 17"><path d="M1 1 H15 V3 M1 1 L8 8 L1 15 H15 V13" stroke="#444" stroke-width="2" fill="none"/></svg>
<div style="position:absolute;left:1668px;top:72px;white-space:pre;color:#262626;font-size:12px;line-height:14px">AutoSum</div>
<svg style="position:absolute;left:1728px;top:77px;" width="7" height="4" viewBox="0 0 7 4"><path d="M0 0 H6 L3 3 Z" fill="#555"/></svg>
<svg style="position:absolute;left:1649px;top:92px;" width="16" height="17" viewBox="0 0 16 17"><rect x="0.5" y="1.5" width="14" height="15" fill="#fff" stroke="#666"/><rect x="0.5" y="0.5" width="15" height="2" fill="#777"/><path d="M7.5 5 V13 M4 9.5 L7.5 13 L11 9.5" stroke="#3a78b8" stroke-width="1.8" fill="none"/></svg>
<div style="position:absolute;left:1668px;top:95px;white-space:pre;color:#262626;font-size:12px;line-height:14px">Fill</div>
<svg style="position:absolute;left:1686px;top:100px;" width="7" height="4" viewBox="0 0 7 4"><path d="M0 0 H6 L3 3 Z" fill="#555"/></svg>
<svg style="position:absolute;left:1649px;top:116px;" width="15" height="16" viewBox="0 0 15 16"><path d="M9 1 L14 6 L7 13 L2 8 Z" fill="#e8808a"/><path d="M2 8 L7 13 L5 15 L0 10 Z" fill="#f0b0b8"/></svg>
<div style="position:absolute;left:1668px;top:118px;white-space:pre;color:#262626;font-size:12px;line-height:14px">Clear</div>
<svg style="position:absolute;left:1698px;top:123px;" width="7" height="4" viewBox="0 0 7 4"><path d="M0 0 H6 L3 3 Z" fill="#555"/></svg>
<svg style="position:absolute;left:1743px;top:72px;" width="31" height="28" viewBox="0 0 31 28"><text x="1" y="12" font-size="13" font-family="Liberation Sans" font-weight="bold" fill="#3e6ea8">A</text><text x="2" y="27" font-size="13" font-family="Liberation Sans" font-weight="bold" fill="#9a6bb8">Z</text><path d="M13 8 H30 L23.5 15 V22 H20 V15 Z" fill="#777"/></svg>
<div style="position:absolute;left:1742px;top:106px;white-space:pre;color:#262626;font-size:12px;line-height:14px">Sort &amp;</div>
<div style="position:absolute;left:1742px;top:122px;white-space:pre;color:#262626;font-size:12px;line-height:14px">Filter</div>
<svg style="position:absolute;left:1773px;top:127px;" width="7" height="4" viewBox="0 0 7 4"><path d="M0 0 H6 L3 3 Z" fill="#555"/></svg>
<svg style="position:absolute;left:1786px;top:71px;" width="30" height="29" viewBox="0 0 30 29"><circle cx="19" cy="11" r="8.5" fill="#fff" stroke="#41709c" stroke-width="2"/><path d="M13 17 L3 26" stroke="#41709c" stroke-width="3" stroke-linecap="round"/></svg>
<div style="position:absolute;left:1784px;top:106px;white-space:pre;color:#262626;font-size:12px;line-height:14px">Find &amp;</div>
<div style="position:absolute;left:1782px;top:122px;white-space:pre;color:#262626;font-size:12px;line-height:14px">Select</div>
<svg style="position:absolute;left:1817px;top:127px;" width="7" height="4" viewBox="0 0 7 4"><path d="M0 0 H6 L3 3 Z" fill="#555"/></svg>
<svg style="position:absolute;left:1901px;top:146px;" width="12" height="7" viewBox="0 0 12 7"><path d="M1 6 L6 1 L11 6" stroke="#555" stroke-width="1.1" fill="none"/></svg>
<div style="position:absolute;left:0px;top:157px;width:1920px;height:85px;background:#e6e6e6"></div>
<div style="position:absolute;left:6px;top:168px;width:100px;height:24px;background:#fff;border:1px solid #d4d4d4;box-sizing:border-box"></div>
<div style="position:absolute;left:12px;top:173px;white-space:pre;color:#262626;font-size:12px;line-height:15px">J21</div>
<div style="position:absolute;left:137px;top:168px;width:109px;height:24px;background:#fff;border:1px solid #d4d4d4;box-sizing:border-box"></div>
<div style="position:absolute;left:250px;top:167px;width:1665px;height:66px;background:#fff;border:1px solid #d4d4d4;box-sizing:border-box"></div>
<svg style="position:absolute;left:93px;top:177px;" width="8" height="5" viewBox="0 0 8 5"><path d="M0 0 H7 L3.5 4 Z" fill="#6a6a6a"/></svg>
<div style="position:absolute;left:121px;top:175px;width:2px;height:2px;background:#9a9a9a"></div>
<div style="position:absolute;left:121px;top:179px;width:2px;height:2px;background:#9a9a9a"></div>
<div style="position:absolute;left:121px;top:183px;width:2px;height:2px;background:#9a9a9a"></div>
<svg style="position:absolute;left:150px;top:176px;" width="11" height="10" viewBox="0 0 11 10"><path d="M1 1 L10 9 M10 1 L1 9" stroke="#ababab" stroke-width="1.3"/></svg>
<svg style="position:absolute;left:185px;top:176px;" width="14" height="10" viewBox="0 0 14 10"><path d="M1 5 L5 9 L13 1" stroke="#b8b8b8" stroke-width="2" fill="none"/></svg>
<div style="position:absolute;left:222px;top:172px;white-space:pre;color:#555;font-family:Liberation Serif;font-size:15px;line-height:16px"><i>f</i><span style="font-size:11px"><i>x</i></span></div>
<svg style="position:absolute;left:1902px;top:177px;" width="10" height="6" viewBox="0 0 10 6"><path d="M1 5 L5 1 L9 5" stroke="#666" stroke-width="2" fill="none"/></svg>
<div style="position:absolute;left:0px;top:241px;width:1902px;height:21px;background:#e6e6e6"></div>
<div style="position:absolute;left:0px;top:261px;width:1902px;height:1px;background:#9b9b9b"></div>
<div style="position:absolute;left:0px;top:262px;width:28px;height:728px;background:#e6e6e6"></div>
<div style="position:absolute;left:28px;top:262px;width:1px;height:728px;background:#9b9b9b"></div>
<div style="position:absolute;left:29px;top:262px;width:1873px;height:728px;background:#fff"></div>
<svg style="position:absolute;left:15px;top:247px;" width="10" height="11" viewBox="0 0 10 11"><path d="M10 0 V10.5 H0 Z" fill="#b4b4b4"/></svg>
<div style="position:absolute;left:28px;top:241px;width:1px;height:20px;background:#9b9b9b"></div>
<div style="position:absolute;left:676px;top:243px;width:72px;height:17px;background:#d2d2d2"></div>
<div style="position:absolute;left:676px;top:260px;width:72px;height:2px;background:#1e5e3c"></div>
<div style="position:absolute;left:29px;top:245px;width:72px;text-align:center;color:#262626;font-size:14.67px;line-height:17px">A</div>
<div style="position:absolute;left:100px;top:243px;width:1px;height:18px;background:#bcbcbc"></div>
<div style="position:absolute;left:101px;top:245px;width:72px;text-align:center;color:#262626;font-size:14.67px;line-height:17px">B</div>
<div style="position:absolute;left:172px;top:243px;width:1px;height:18px;background:#bcbcbc"></div>
<div style="position:absolute;left:173px;top:245px;width:72px;text-align:center;color:#262626;font-size:14.67px;line-height:17px">C</div>
<div style="position:absolute;left:244px;top:243px;width:1px;height:18px;background:#bcbcbc"></div>
<div style="position:absolute;left:245px;top:245px;width:72px;text-align:center;color:#262626;font-size:14.67px;line-height:17px">D</div>
<div style="position:absolute;left:316px;top:243px;width:1px;height:18px;background:#bcbcbc"></div>
<div style="position:absolute;left:317px;top:245px;width:72px;text-align:center;color:#262626;font-size:14.67px;line-height:17px">E</div>
<div style="position:absolute;left:388px;top:243px;width:1px;height:18px;background:#bcbcbc"></div>
<div style="position:absolute;left:389px;top:245px;width:72px;text-align:center;color:#262626;font-size:14.67px;line-height:17px">F</div>
<div style="position:absolute;left:460px;top:243px;width:1px;height:18px;background:#bcbcbc"></div>
<div style="position:absolute;left:461px;top:245px;width:72px;text-align:center;color:#262626;font-size:14.67px;line-height:17px">G</div>
<div style="position:absolute;left:532px;top:243px;width:1px;height:18px;background:#bcbcbc"></div>
<div style="position:absolute;left:533px;top:245px;width:72px;text-align:center;color:#262626;font-size:14.67px;line-height:17px">H</div>
<div style="position:absolute;left:604px;top:243px;width:1px;height:18px;background:#bcbcbc"></div>
<div style="position:absolute;left:605px;top:245px;width:72px;text-align:center;color:#262626;font-size:14.67px;line-height:17px">I</div>
<div style="position:absolute;left:676px;top:243px;width:1px;height:18px;background:#bcbcbc"></div>
<div style="position:absolute;left:677px;top:245px;width:72px;text-align:center;color:#34463c;font-size:14.67px;line-height:17px">J</div>
<div style="position:absolute;left:748px;top:243px;width:1px;height:18px;background:#bcbcbc"></div>
<div style="position:absolute;left:749px;top:245px;width:72px;text-align:center;color:#262626;font-size:14.67px;line-height:17px">K</div>
<div style="position:absolute;left:820px;top:243px;width:1px;height:18px;background:#bcbcbc"></div>
<div style="position:absolute;left:821px;top:245px;width:72px;text-align:center;color:#262626;font-size:14.67px;line-height:17px">L</div>
<div style="position:absolute;left:892px;top:243px;width:1px;height:18px;background:#bcbcbc"></div>
<div style="position:absolute;left:893px;top:245px;width:72px;text-align:center;color:#262626;font-size:14.67px;line-height:17px">M</div>
<div style="position:absolute;left:964px;top:243px;width:1px;height:18px;background:#bcbcbc"></div>
<div style="position:absolute;left:965px;top:245px;width:72px;text-align:center;color:#262626;font-size:14.67px;line-height:17px">N</div>
<div style="position:absolute;left:1036px;top:243px;width:1px;height:18px;background:#bcbcbc"></div>
<div style="position:absolute;left:1037px;top:245px;width:72px;text-align:center;color:#262626;font-size:14.67px;line-height:17px">O</div>
<div style="position:absolute;left:1108px;top:243px;width:1px;height:18px;background:#bcbcbc"></div>
<div style="position:absolute;left:1109px;top:245px;width:72px;text-align:center;color:#262626;font-size:14.67px;line-height:17px">P</div>
<div style="position:absolute;left:1180px;top:243px;width:1px;height:18px;background:#bcbcbc"></div>
<div style="position:absolute;left:1181px;top:245px;width:72px;text-align:center;color:#262626;font-size:14.67px;line-height:17px">Q</div>
<div style="position:absolute;left:1252px;top:243px;width:1px;height:18px;background:#bcbcbc"></div>
<div style="position:absolute;left:1253px;top:245px;width:72px;text-align:center;color:#262626;font-size:14.67px;line-height:17px">R</div>
<div style="position:absolute;left:1324px;top:243px;width:1px;height:18px;background:#bcbcbc"></div>
<div style="position:absolute;left:1325px;top:245px;width:72px;text-align:center;color:#262626;font-size:14.67px;line-height:17px">S</div>
<div style="position:absolute;left:1396px;top:243px;width:1px;height:18px;background:#bcbcbc"></div>
<div style="position:absolute;left:1397px;top:245px;width:72px;text-align:center;color:#262626;font-size:14.67px;line-height:17px">T</div>
<div style="position:absolute;left:1468px;top:243px;width:1px;height:18px;background:#bcbcbc"></div>
<div style="position:absolute;left:1469px;top:245px;width:72px;text-align:center;color:#262626;font-size:14.67px;line-height:17px">U</div>
<div style="position:absolute;left:1540px;top:243px;width:1px;height:18px;background:#bcbcbc"></div>
<div style="position:absolute;left:1541px;top:245px;width:72px;text-align:center;color:#262626;font-size:14.67px;line-height:17px">V</div>
<div style="position:absolute;left:1612px;top:243px;width:1px;height:18px;background:#bcbcbc"></div>
<div style="position:absolute;left:1613px;top:245px;width:72px;text-align:center;color:#262626;font-size:14.67px;line-height:17px">W</div>
<div style="position:absolute;left:1684px;top:243px;width:1px;height:18px;background:#bcbcbc"></div>
<div style="position:absolute;left:1685px;top:245px;width:72px;text-align:center;color:#262626;font-size:14.67px;line-height:17px">X</div>
<div style="position:absolute;left:1756px;top:243px;width:1px;height:18px;background:#bcbcbc"></div>
<div style="position:absolute;left:1757px;top:245px;width:72px;text-align:center;color:#262626;font-size:14.67px;line-height:17px">Y</div>
<div style="position:absolute;left:1828px;top:243px;width:1px;height:18px;background:#bcbcbc"></div>
<div style="position:absolute;left:1829px;top:245px;width:72px;text-align:center;color:#262626;font-size:14.67px;line-height:17px">Z</div>
<div style="position:absolute;left:1900px;top:243px;width:1px;height:18px;background:#bcbcbc"></div>
<div style="position:absolute;left:28px;top:280px;width:1871px;height:1px;background:#d4d4d4"></div>
<div style="position:absolute;left:0px;top:280px;width:27px;height:1px;background:#bcbcbc"></div>
<div style="position:absolute;left:28px;top:299px;width:1871px;height:1px;background:#d4d4d4"></div>
<div style="position:absolute;left:0px;top:299px;width:27px;height:1px;background:#bcbcbc"></div>
<div style="position:absolute;left:28px;top:318px;width:1871px;height:1px;background:#d4d4d4"></div>
<div style="position:absolute;left:0px;top:318px;width:27px;height:1px;background:#bcbcbc"></div>
<div style="position:absolute;left:28px;top:337px;width:1871px;height:1px;background:#d4d4d4"></div>
<div style="position:absolute;left:0px;top:337px;width:27px;height:1px;background:#bcbcbc"></div>
<div style="position:absolute;left:28px;top:356px;width:1871px;height:1px;background:#d4d4d4"></div>
<div style="position:absolute;left:0px;top:356px;width:27px;height:1px;background:#bcbcbc"></div>
<div style="position:absolute;left:28px;top:375px;width:1871px;height:1px;background:#d4d4d4"></div>
<div style="position:absolute;left:0px;top:375px;width:27px;height:1px;background:#bcbcbc"></div>
<div style="position:absolute;left:28px;top:394px;width:1871px;height:1px;background:#d4d4d4"></div>
<div style="position:absolute;left:0px;top:394px;width:27px;height:1px;background:#bcbcbc"></div>
<div style="position:absolute;left:28px;top:413px;width:1871px;height:1px;background:#d4d4d4"></div>
<div style="position:absolute;left:0px;top:413px;width:27px;height:1px;background:#bcbcbc"></div>
<div style="position:absolute;left:28px;top:432px;width:1871px;height:1px;background:#d4d4d4"></div>
<div style="position:absolute;left:0px;top:432px;width:27px;height:1px;background:#bcbcbc"></div>
<div style="position:absolute;left:28px;top:451px;width:1871px;height:1px;background:#d4d4d4"></div>
<div style="position:absolute;left:0px;top:451px;width:27px;height:1px;background:#bcbcbc"></div>
<div style="position:absolute;left:28px;top:470px;width:1871px;height:1px;background:#d4d4d4"></div>
<div style="position:absolute;left:0px;top:470px;width:27px;height:1px;background:#bcbcbc"></div>
<div style="position:absolute;left:28px;top:489px;width:1871px;height:1px;background:#d4d4d4"></div>
<div style="position:absolute;left:0px;top:489px;width:27px;height:1px;background:#bcbcbc"></div>
<div style="position:absolute;left:28px;top:508px;width:1871px;height:1px;background:#d4d4d4"></div>
<div style="position:absolute;left:0px;top:508px;width:27px;height:1px;background:#bcbcbc"></div>
<div style="position:absolute;left:28px;top:527px;width:1871px;height:1px;background:#d4d4d4"></div>
<div style="position:absolute;left:0px;top:527px;width:27px;height:1px;background:#bcbcbc"></div>
<div style="position:absolute;left:28px;top:546px;width:1871px;height:1px;background:#d4d4d4"></div>
<div style="position:absolute;left:0px;top:546px;width:27px;height:1px;background:#bcbcbc"></div>
<div style="position:absolute;left:28px;top:565px;width:1871px;height:1px;background:#d4d4d4"></div>
<div style="position:absolute;left:0px;top:565px;width:27px;height:1px;background:#bcbcbc"></div>
<div style="position:absolute;left:28px;top:584px;width:1871px;height:1px;background:#d4d4d4"></div>
<div style="position:absolute;left:0px;top:584px;width:27px;height:1px;background:#bcbcbc"></div>
<div style="position:absolute;left:28px;top:603px;width:1871px;height:1px;background:#d4d4d4"></div>
<div style="position:absolute;left:0px;top:603px;width:27px;height:1px;background:#bcbcbc"></div>
<div style="position:absolute;left:28px;top:622px;width:1871px;height:1px;background:#d4d4d4"></div>
<div style="position:absolute;left:0px;top:622px;width:27px;height:1px;background:#bcbcbc"></div>
<div style="position:absolute;left:28px;top:641px;width:1871px;height:1px;background:#d4d4d4"></div>
<div style="position:absolute;left:0px;top:641px;width:27px;height:1px;background:#bcbcbc"></div>
<div style="position:absolute;left:28px;top:660px;width:1871px;height:1px;background:#d4d4d4"></div>
<div style="position:absolute;left:0px;top:660px;width:27px;height:1px;background:#bcbcbc"></div>
<div style="position:absolute;left:28px;top:679px;width:1871px;height:1px;background:#d4d4d4"></div>
<div style="position:absolute;left:0px;top:679px;width:27px;height:1px;background:#bcbcbc"></div>
<div style="position:absolute;left:28px;top:698px;width:1871px;height:1px;background:#d4d4d4"></div>
<div style="position:absolute;left:0px;top:698px;width:27px;height:1px;background:#bcbcbc"></div>
<div style="position:absolute;left:28px;top:717px;width:1871px;height:1px;background:#d4d4d4"></div>
<div style="position:absolute;left:0px;top:717px;width:27px;height:1px;background:#bcbcbc"></div>
<div style="position:absolute;left:28px;top:736px;width:1871px;height:1px;background:#d4d4d4"></div>
<div style="position:absolute;left:0px;top:736px;width:27px;height:1px;background:#bcbcbc"></div>
<div style="position:absolute;left:28px;top:755px;width:1871px;height:1px;background:#d4d4d4"></div>
<div style="position:absolute;left:0px;top:755px;width:27px;height:1px;background:#bcbcbc"></div>
<div style="position:absolute;left:28px;top:774px;width:1871px;height:1px;background:#d4d4d4"></div>
<div style="position:absolute;left:0px;top:774px;width:27px;height:1px;background:#bcbcbc"></div>
<div style="position:absolute;left:28px;top:793px;width:1871px;height:1px;background:#d4d4d4"></div>
<div style="position:absolute;left:0px;top:793px;width:27px;height:1px;background:#bcbcbc"></div>
<div style="position:absolute;left:28px;top:812px;width:1871px;height:1px;background:#d4d4d4"></div>
<div style="position:absolute;left:0px;top:812px;width:27px;height:1px;background:#bcbcbc"></div>
<div style="position:absolute;left:28px;top:831px;width:1871px;height:1px;background:#d4d4d4"></div>
<div style="position:absolute;left:0px;top:831px;width:27px;height:1px;background:#bcbcbc"></div>
<div style="position:absolute;left:28px;top:850px;width:1871px;height:1px;background:#d4d4d4"></div>
<div style="position:absolute;left:0px;top:850px;width:27px;height:1px;background:#bcbcbc"></div>
<div style="position:absolute;left:28px;top:869px;width:1871px;height:1px;background:#d4d4d4"></div>
<div style="position:absolute;left:0px;top:869px;width:27px;height:1px;background:#bcbcbc"></div>
<div style="position:absolute;left:28px;top:888px;width:1871px;height:1px;background:#d4d4d4"></div>
<div style="position:absolute;left:0px;top:888px;width:27px;height:1px;background:#bcbcbc"></div>
<div style="position:absolute;left:28px;top:907px;width:1871px;height:1px;background:#d4d4d4"></div>
<div style="position:absolute;left:0px;top:907px;width:27px;height:1px;background:#bcbcbc"></div>
<div style="position:absolute;left:28px;top:926px;width:1871px;height:1px;background:#d4d4d4"></div>
<div style="position:absolute;left:0px;top:926px;width:27px;height:1px;background:#bcbcbc"></div>
<div style="position:absolute;left:28px;top:945px;width:1871px;height:1px;background:#d4d4d4"></div>
<div style="position:absolute;left:0px;top:945px;width:27px;height:1px;background:#bcbcbc"></div>
<div style="position:absolute;left:28px;top:964px;width:1871px;height:1px;background:#d4d4d4"></div>
<div style="position:absolute;left:0px;top:964px;width:27px;height:1px;background:#bcbcbc"></div>
<div style="position:absolute;left:28px;top:983px;width:1871px;height:1px;background:#d4d4d4"></div>
<div style="position:absolute;left:0px;top:983px;width:27px;height:1px;background:#bcbcbc"></div>
<div style="position:absolute;left:100px;top:262px;width:1px;height:728px;background:#d4d4d4"></div>
<div style="position:absolute;left:172px;top:262px;width:1px;height:728px;background:#d4d4d4"></div>
<div style="position:absolute;left:244px;top:262px;width:1px;height:728px;background:#d4d4d4"></div>
<div style="position:absolute;left:316px;top:262px;width:1px;height:728px;background:#d4d4d4"></div>
<div style="position:absolute;left:388px;top:262px;width:1px;height:728px;background:#d4d4d4"></div>
<div style="position:absolute;left:460px;top:262px;width:1px;height:728px;background:#d4d4d4"></div>
<div style="position:absolute;left:532px;top:262px;width:1px;height:728px;background:#d4d4d4"></div>
<div style="position:absolute;left:604px;top:262px;width:1px;height:728px;background:#d4d4d4"></div>
<div style="position:absolute;left:676px;top:262px;width:1px;height:728px;background:#d4d4d4"></div>
<div style="position:absolute;left:748px;top:262px;width:1px;height:728px;background:#d4d4d4"></div>
<div style="position:absolute;left:820px;top:262px;width:1px;height:728px;background:#d4d4d4"></div>
<div style="position:absolute;left:892px;top:262px;width:1px;height:728px;background:#d4d4d4"></div>
<div style="position:absolute;left:964px;top:262px;width:1px;height:728px;background:#d4d4d4"></div>
<div style="position:absolute;left:1036px;top:262px;width:1px;height:728px;background:#d4d4d4"></div>
<div style="position:absolute;left:1108px;top:262px;width:1px;height:728px;background:#d4d4d4"></div>
<div style="position:absolute;left:1180px;top:262px;width:1px;height:728px;background:#d4d4d4"></div>
<div style="position:absolute;left:1252px;top:262px;width:1px;height:728px;background:#d4d4d4"></div>
<div style="position:absolute;left:1324px;top:262px;width:1px;height:728px;background:#d4d4d4"></div>
<div style="position:absolute;left:1396px;top:262px;width:1px;height:728px;background:#d4d4d4"></div>
<div style="position:absolute;left:1468px;top:262px;width:1px;height:728px;background:#d4d4d4"></div>
<div style="position:absolute;left:1540px;top:262px;width:1px;height:728px;background:#d4d4d4"></div>
<div style="position:absolute;left:1612px;top:262px;width:1px;height:728px;background:#d4d4d4"></div>
<div style="position:absolute;left:1684px;top:262px;width:1px;height:728px;background:#d4d4d4"></div>
<div style="position:absolute;left:1756px;top:262px;width:1px;height:728px;background:#d4d4d4"></div>
<div style="position:absolute;left:1828px;top:262px;width:1px;height:728px;background:#d4d4d4"></div>
<div style="position:absolute;left:1900px;top:262px;width:1px;height:728px;background:#d4d4d4"></div>
<div style="position:absolute;left:0px;top:642px;width:28px;height:18px;background:#d2d2d2"></div>
<div style="position:absolute;left:27px;top:641px;width:2px;height:20px;background:#1e5e3c"></div>
<div style="position:absolute;left:0px;top:264px;width:28px;text-align:center;color:#262626;font-size:14.67px;line-height:17px">1</div>
<div style="position:absolute;left:0px;top:283px;width:28px;text-align:center;color:#262626;font-size:14.67px;line-height:17px">2</div>
<div style="position:absolute;left:0px;top:302px;width:28px;text-align:center;color:#262626;font-size:14.67px;line-height:17px">3</div>
<div style="position:absolute;left:0px;top:321px;width:28px;text-align:center;color:#262626;font-size:14.67px;line-height:17px">4</div>
<div style="position:absolute;left:0px;top:340px;width:28px;text-align:center;color:#262626;font-size:14.67px;line-height:17px">5</div>
<div style="position:absolute;left:0px;top:359px;width:28px;text-align:center;color:#262626;font-size:14.67px;line-height:17px">6</div>
<div style="position:absolute;left:0px;top:378px;width:28px;text-align:center;color:#262626;font-size:14.67px;line-height:17px">7</div>
<div style="position:absolute;left:0px;top:397px;width:28px;text-align:center;color:#262626;font-size:14.67px;line-height:17px">8</div>
<div style="position:absolute;left:0px;top:416px;width:28px;text-align:center;color:#262626;font-size:14.67px;line-height:17px">9</div>
<div style="position:absolute;left:0px;top:435px;width:28px;text-align:center;color:#262626;font-size:14.67px;line-height:17px">10</div>
<div style="position:absolute;left:0px;top:454px;width:28px;text-align:center;color:#262626;font-size:14.67px;line-height:17px">11</div>
<div style="position:absolute;left:0px;top:473px;width:28px;text-align:center;color:#262626;font-size:14.67px;line-height:17px">12</div>
<div style="position:absolute;left:0px;top:492px;width:28px;text-align:center;color:#262626;font-size:14.67px;line-height:17px">13</div>
<div style="position:absolute;left:0px;top:511px;width:28px;text-align:center;color:#262626;font-size:14.67px;line-height:17px">14</div>
<div style="position:absolute;left:0px;top:530px;width:28px;text-align:center;color:#262626;font-size:14.67px;line-height:17px">15</div>
<div style="position:absolute;left:0px;top:549px;width:28px;text-align:center;color:#262626;font-size:14.67px;line-height:17px">16</div>
<div style="position:absolute;left:0px;top:568px;width:28px;text-align:center;color:#262626;font-size:14.67px;line-height:17px">17</div>
<div style="position:absolute;left:0px;top:587px;width:28px;text-align:center;color:#262626;font-size:14.67px;line-height:17px">18</div>
<div style="position:absolute;left:0px;top:606px;width:28px;text-align:center;color:#262626;font-size:14.67px;line-height:17px">19</div>
<div style="position:absolute;left:0px;top:625px;width:28px;text-align:center;color:#262626;font-size:14.67px;line-height:17px">20</div>
<div style="position:absolute;left:0px;top:644px;width:28px;text-align:center;color:#2f5e44;font-size:14.67px;line-height:17px">21</div>
<div style="position:absolute;left:0px;top:663px;width:28px;text-align:center;color:#262626;font-size:14.67px;line-height:17px">22</div>
<div style="position:absolute;left:0px;top:682px;width:28px;text-align:center;color:#262626;font-size:14.67px;line-height:17px">23</div>
<div style="position:absolute;left:0px;top:701px;width:28px;text-align:center;color:#262626;font-size:14.67px;line-height:17px">24</div>
<div style="position:absolute;left:0px;top:720px;width:28px;text-align:center;color:#262626;font-size:14.67px;line-height:17px">25</div>
<div style="position:absolute;left:0px;top:739px;width:28px;text-align:center;color:#262626;font-size:14.67px;line-height:17px">26</div>
<div style="position:absolute;left:0px;top:758px;width:28px;text-align:center;color:#262626;font-size:14.67px;line-height:17px">27</div>
<div style="position:absolute;left:0px;top:777px;width:28px;text-align:center;color:#262626;font-size:14.67px;line-height:17px">28</div>
<div style="position:absolute;left:0px;top:796px;width:28px;text-align:center;color:#262626;font-size:14.67px;line-height:17px">29</div>
<div style="position:absolute;left:0px;top:815px;width:28px;text-align:center;color:#262626;font-size:14.67px;line-height:17px">30</div>
<div style="position:absolute;left:0px;top:834px;width:28px;text-align:center;color:#262626;font-size:14.67px;line-height:17px">31</div>
<div style="position:absolute;left:0px;top:853px;width:28px;text-align:center;color:#262626;font-size:14.67px;line-height:17px">32</div>
<div style="position:absolute;left:0px;top:872px;width:28px;text-align:center;color:#262626;font-size:14.67px;line-height:17px">33</div>
<div style="position:absolute;left:0px;top:891px;width:28px;text-align:center;color:#262626;font-size:14.67px;line-height:17px">34</div>
<div style="position:absolute;left:0px;top:910px;width:28px;text-align:center;color:#262626;font-size:14.67px;line-height:17px">35</div>
<div style="position:absolute;left:0px;top:929px;width:28px;text-align:center;color:#262626;font-size:14.67px;line-height:17px">36</div>
<div style="position:absolute;left:0px;top:948px;width:28px;text-align:center;color:#262626;font-size:14.67px;line-height:17px">37</div>
<div style="position:absolute;left:0px;top:967px;width:28px;text-align:center;color:#262626;font-size:14.67px;line-height:17px">38</div>
<div style="position:absolute;left:0px;top:986px;width:28px;text-align:center;color:#262626;font-size:14.67px;line-height:17px">39</div>
<div style="position:absolute;left:29px;top:281px;width:287px;height:18px;background:#fff"></div>
<div style="position:absolute;left:31px;top:283px;white-space:pre;color:#000;font-size:14.47px;line-height:17px;letter-spacing:-0.0621px" class="rt" id="t2">BÁO CÁO CHI TIẾT BÁN HÀNG,,,,,,,,,,,,,,,,,,</div>
<div style="position:absolute;left:29px;top:300px;width:143px;height:18px;background:#fff"></div>
<div style="position:absolute;left:31px;top:302px;white-space:pre;color:#000;font-size:14.47px;line-height:17px;letter-spacing:-0.0922px" class="rt" id="t3">,,,,,,,,,,,,,,,,,,</div>
<div style="position:absolute;left:29px;top:319px;width:287px;height:18px;background:#fff"></div>
<div style="position:absolute;left:31px;top:321px;white-space:pre;color:#000;font-size:14.47px;line-height:17px;letter-spacing:-0.0152px" class="rt" id="t4">[01] Kỳ báo cáo: Tháng 06/2025,,,,,,,,,,,,,,,,,,</div>
<div style="position:absolute;left:29px;top:338px;width:143px;height:18px;background:#fff"></div>
<div style="position:absolute;left:31px;top:340px;white-space:pre;color:#000;font-size:14.47px;line-height:17px;letter-spacing:-0.0614px" class="rt" id="t5">,,,,,,,,,,,,,,,,,</div>
<div style="position:absolute;left:29px;top:357px;width:575px;height:18px;background:#fff"></div>
<div style="position:absolute;left:31px;top:359px;white-space:pre;color:#000;font-size:14.47px;line-height:17px;letter-spacing:0.0028px" class="rt" id="t6">[02] Tên đơn vị: CÔNG TY CỔ PHẦN TRUYỀN THÔNG TRẠM ĐỌC,,,,,,,,,,,,,,,,,,</div>
<div style="position:absolute;left:29px;top:376px;width:287px;height:18px;background:#fff"></div>
<div style="position:absolute;left:31px;top:378px;white-space:pre;color:#000;font-size:14.47px;line-height:17px;letter-spacing:-0.0364px" class="rt" id="t7">[03] Mã số thuế: '0107645642,,,,,,,,,,,,,,,,,,</div>
<div style="position:absolute;left:29px;top:395px;width:143px;height:18px;background:#fff"></div>
<div style="position:absolute;left:31px;top:397px;white-space:pre;color:#000;font-size:14.47px;line-height:17px;letter-spacing:-0.0922px" class="rt" id="t8">,,,,,,,,,,,,,,,,,,</div>
<div style="position:absolute;left:29px;top:414px;width:1727px;height:18px;background:#fff"></div>
<div style="position:absolute;left:31px;top:416px;white-space:pre;color:#000;font-size:14.47px;line-height:17px;letter-spacing:0.0129px" class="rt" id="t9">STT,Đơn vị mua hàng,MST đơn vị mua hàng,Địa chỉ,Ngày bán (Xuất HD),Ký hiệu mẫu,Ký hiệu,Số HĐ,Diễn giải,Mã hàng,Tên hàng,ĐVT,Số lượng,Đơn giá,Chiết khấu,Doanh thu,Thuế suất,Tiền thuế,Thành tiền,Ghi chú, Mã đơn hàng, Mã đặt hàng, Mã tra cứu</div>
<div style="position:absolute;left:29px;top:433px;width:575px;height:18px;background:#fff"></div>
<div style="position:absolute;left:31px;top:435px;white-space:pre;color:#000;font-size:14.47px;line-height:17px;letter-spacing:-0.0192px" class="rt" id="t10">[1],[2],[3],[4],[5],[6],[7],[8],[9],[10],[11],[12],[13],[14],[15],[16],[17],[18],[19],[20],[21],[22],[23]</div>
<div style="position:absolute;left:29px;top:452px;width:1799px;height:18px;background:#fff"></div>
<div style="position:absolute;left:31px;top:454px;white-space:pre;color:#000;font-size:14.47px;line-height:17px;letter-spacing:-0.0030px" class="rt" id="t11">1,"Người mua không lấy hóa đơn","","","02/06/2025","1","C25MPP","1","Đã phát hành","CAFE9","Cà phê bạc sỉu",Cốc,1.000000000,"46296.296300000","0.000000000","46296.296300000",8,"3704.000000000","50000.000000000","","","","1R67NL14Q52E71G6CQ8EJ5DE"</div>
<div style="position:absolute;left:29px;top:471px;width:1799px;height:18px;background:#fff"></div>
<div style="position:absolute;left:31px;top:473px;white-space:pre;color:#000;font-size:14.47px;line-height:17px;letter-spacing:-0.0140px" class="rt" id="t12">2,"Người mua không lấy hóa đơn","","","02/06/2025","1","C25MPP","2","Đã phát hành","N07","Trà Chanh Gừng Mật Ong",Cốc,1.000000000,"41666.666700000","0.000000000","41666.666700000",8,"3333.000000000","45000.000000000","","","","1R67NL14Q52EPCF1IJSBPB7"</div>
<div style="position:absolute;left:29px;top:490px;width:1799px;height:18px;background:#fff"></div>
<div style="position:absolute;left:31px;top:492px;white-space:pre;color:#000;font-size:14.47px;line-height:17px;letter-spacing:-0.0106px" class="rt" id="t13">3,"Người mua không lấy hóa đơn","","","02/06/2025","1","C25MPP","3","Đã phát hành","NE1","Nước ép dưa hấu nha đam",Cốc,1.000000000,"46296.296300000","0.000000000","46296.296300000",8,"3704.000000000","50000.000000000","","","","1R67NL14Q52E2J8PDTIT16P"</div>
<div style="position:absolute;left:29px;top:509px;width:1871px;height:18px;background:#fff"></div>
<div style="position:absolute;left:31px;top:511px;white-space:pre;color:#000;font-size:14.47px;line-height:17px;letter-spacing:-0.0041px" class="rt" id="t14">4,"Người mua không lấy hóa đơn","","","02/06/2025","1","C25MPP","4","Đã phát hành","THQND1","Trà Hoa Quả Nhiệt Đới ",Cốc,1.000000000,"50925.925900000","0.000000000","50925.925900000",8,"4074.000000000","55000.000000000","","","","1R67NL14Q52E71G6DJ1S5QKK"</div>
<div style="position:absolute;left:29px;top:528px;width:1871px;height:18px;background:#fff"></div>
<div style="position:absolute;left:31px;top:530px;white-space:pre;color:#000;font-size:14.47px;line-height:17px;letter-spacing:-0.0211px" class="rt" id="t15">5,"Người mua không lấy hóa đơn","","","02/06/2025","1","C25MPP","5","Đã phát hành","ITEM-70LD","Trà cam vàng đào nhài",Cốc,1.000000000,"50925.925900000","0.000000000","50925.925900000",8,"4074.000000000","55000.000000000","","","","1R67NL14Q52E71G7GN4NLPV2"</div>
<div style="position:absolute;left:29px;top:547px;width:1799px;height:18px;background:#fff"></div>
<div style="position:absolute;left:31px;top:549px;white-space:pre;color:#000;font-size:14.47px;line-height:17px;letter-spacing:-0.0347px" class="rt" id="t16">6,"Người mua không lấy hóa đơn","","","02/06/2025","1","C25MPP","6","Đã phát hành","DUAXIEM02","Dừa Xiêm",Cốc,1.000000000,"46296.296300000","0.000000000","46296.296300000",8,"3704.000000000","50000.000000000","","","","1R67NL14Q52E71G78LR17VTM"</div>
<div style="position:absolute;left:29px;top:566px;width:1799px;height:18px;background:#fff"></div>
<div style="position:absolute;left:31px;top:568px;white-space:pre;color:#000;font-size:14.47px;line-height:17px;letter-spacing:-0.0109px" class="rt" id="t17">7,"Người mua không lấy hóa đơn","","","02/06/2025","1","C25MPP","7","Đã phát hành","CAFE5","Cà phê nâu đá",Cốc,1.000000000,"41666.666700000","0.000000000","41666.666700000",8,"3333.000000000","44999.660000000","","","","1R67NL14Q52E71G76W9A0BLB"</div>
<div style="position:absolute;left:29px;top:585px;width:1799px;height:18px;background:#fff"></div>
<div style="position:absolute;left:31px;top:587px;white-space:pre;color:#000;font-size:14.47px;line-height:17px;letter-spacing:-0.0088px" class="rt" id="t18">8,"Người mua không lấy hóa đơn","","","02/06/2025","1","C25MPP","7","Đã phát hành","THQ07","Trà sen dừa lá nếp",Cốc,1.000000000,"50925.925900000","0.000000000","50925.925900000",8,"4074.000000000","55000.330000000","","","","1R67NL14Q52E71G76W9A0BLB"</div>
<div style="position:absolute;left:29px;top:604px;width:1871px;height:18px;background:#fff"></div>
<div style="position:absolute;left:31px;top:606px;white-space:pre;color:#000;font-size:14.47px;line-height:17px;letter-spacing:-0.0040px" class="rt" id="t19">9,"Người mua không lấy hóa đơn","","","02/06/2025","1","C25MPP","8","Đã phát hành","NE1","Nước ép dưa hấu nha đam",Cốc,1.000000000,"46296.296300000","0.000000000","46296.296300000",8,"3704.000000000","50000.000000000","","","","1R67NL14Q52E71G7F0ERSL11"</div>
<div style="position:absolute;left:29px;top:623px;width:1799px;height:18px;background:#fff"></div>
<div style="position:absolute;left:31px;top:625px;white-space:pre;color:#000;font-size:14.47px;line-height:17px;letter-spacing:-0.0106px" class="rt" id="t20">10,"Người mua không lấy hóa đơn","","","02/06/2025","1","C25MPP","9","Đã phát hành","CAFE5","Cà phê nâu đá",Cốc,1.000000000,"41666.666700000","0.000000000","41666.666700000",8,"3333.000000000","45000.000000000","","","","1R67NL14Q52E71G76RSQS6EL"</div>
<div style="position:absolute;left:29px;top:642px;width:1799px;height:18px;background:#fff"></div>
<div style="position:absolute;left:31px;top:644px;white-space:pre;color:#000;font-size:14.47px;line-height:17px;letter-spacing:-0.0009px" class="rt" id="t21">11,"Người mua không lấy hóa đơn","","","02/06/2025","1","C25MPP","10","Đã phát hành","THQ07","Trà sen dừa lá nếp",Cốc,1.000000000,"50925.925900000","0.000000000","50925.925900000",8,"4074.000000000","55000.000000000","","","","1R67NL14Q52E71G7ES4DFLWZ"</div>
<div style="position:absolute;left:29px;top:661px;width:1871px;height:18px;background:#fff"></div>
<div style="position:absolute;left:31px;top:663px;white-space:pre;color:#000;font-size:14.47px;line-height:17px;letter-spacing:-0.0065px" class="rt" id="t22">12,"Người mua không lấy hóa đơn","","","02/06/2025","1","C25MPP","11","Đã phát hành","THQND1","Trà Hoa Quả Nhiệt Đới ",Cốc,1.000000000,"50925.925900000","0.000000000","50925.925900000",8,"4074.000000000","55000.000000000","","","","1R67NL14Q52EPCF5JI2DJQT"</div>
<div style="position:absolute;left:29px;top:680px;width:1871px;height:18px;background:#fff"></div>
<div style="position:absolute;left:31px;top:682px;white-space:pre;color:#000;font-size:14.47px;line-height:17px;letter-spacing:-0.0226px" class="rt" id="t23">13,"Người mua không lấy hóa đơn","","","02/06/2025","1","C25MPP","12","Đã phát hành","ITEM-70LD","Trà cam vàng đào nhài",Cốc,1.000000000,"50925.925900000","0.000000000","50925.925900000",8,"4074.000000000","55000.000000000","","","","1R67NL14Q52E71G7148IBVF6"</div>
<div style="position:absolute;left:29px;top:699px;width:1871px;height:18px;background:#fff"></div>
<div style="position:absolute;left:31px;top:701px;white-space:pre;color:#000;font-size:14.47px;line-height:17px;letter-spacing:-0.0141px" class="rt" id="t24">14,"Người mua không lấy hóa đơn","","","02/06/2025","1","C25MPP","13","Đã phát hành","NHADAM02","TP - Thạch nha đam",Phần,1.000000000,"4629.629600000","0.000000000","4629.629600000",8,"370.000000000","4999.620000000","","","","1R67NL14Q52E71G70QRS6PA4"</div>
<div style="position:absolute;left:29px;top:718px;width:1799px;height:18px;background:#fff"></div>
<div style="position:absolute;left:31px;top:720px;white-space:pre;color:#000;font-size:14.47px;line-height:17px;letter-spacing:-0.0036px" class="rt" id="t25">15,"Người mua không lấy hóa đơn","","","02/06/2025","1","C25MPP","13","Đã phát hành","THQ07","Trà sen dừa lá nếp",Cốc,1.000000000,"50925.925900000","0.000000000","50925.925900000",8,"4074.000000000","55000.370000000","","","","1R67NL14Q52E71G70QRS6PA4"</div>
<div style="position:absolute;left:29px;top:737px;width:1799px;height:18px;background:#fff"></div>
<div style="position:absolute;left:31px;top:739px;white-space:pre;color:#000;font-size:14.47px;line-height:17px;letter-spacing:-0.0165px" class="rt" id="t26">16,"Người mua không lấy hóa đơn","","","02/06/2025","1","C25MPP","14","Đã phát hành","TOLV01","Trà Oolong Lê Vải",Cốc,1.000000000,"50925.925900000","0.000000000","50925.925900000",8,"4074.000000000","55000.000000000","","","","1R67NL14Q52E71G70IIEPQNF"</div>
<div style="position:absolute;left:29px;top:756px;width:1871px;height:18px;background:#fff"></div>
<div style="position:absolute;left:31px;top:758px;white-space:pre;color:#000;font-size:14.47px;line-height:17px;letter-spacing:-0.0017px" class="rt" id="t27">17,"Người mua không lấy hóa đơn","","","02/06/2025","1","C25MPP","15","Đã phát hành","NE1","Nước ép dưa hấu nha đam",Cốc,1.000000000,"46296.296300000","0.000000000","46296.296300000",8,"3704.000000000","50000.000000000","","","","1R67NL14Q52E2J8PNDJATWP"</div>
<div style="position:absolute;left:29px;top:775px;width:1799px;height:18px;background:#fff"></div>
<div style="position:absolute;left:31px;top:777px;white-space:pre;color:#000;font-size:14.47px;line-height:17px;letter-spacing:-0.0214px" class="rt" id="t28">18,"Người mua không lấy hóa đơn","","","02/06/2025","1","C25MPP","16","Đã phát hành","CAFE5","Cà phê nâu đá",Cốc,1.000000000,"41666.666700000","0.000000000","41666.666700000",8,"3333.000000000","45000.000000000","","","","1R67NL14Q52EPCF3N9I6518"</div>
<div style="position:absolute;left:29px;top:794px;width:1799px;height:18px;background:#fff"></div>
<div style="position:absolute;left:31px;top:796px;white-space:pre;color:#000;font-size:14.47px;line-height:17px;letter-spacing:-0.0262px" class="rt" id="t29">19,"Người mua không lấy hóa đơn","","","02/06/2025","1","C25MPP","17","Đã phát hành","DUAXIEM02","Dừa Xiêm",Cốc,1.000000000,"46296.296300000","0.000000000","46296.296300000",8,"3704.000000000","50000.000000000","","","","1R67NL14Q52E2J8PPE2SH44"</div>
<div style="position:absolute;left:29px;top:813px;width:1799px;height:18px;background:#fff"></div>
<div style="position:absolute;left:31px;top:815px;white-space:pre;color:#000;font-size:14.47px;line-height:17px;letter-spacing:-0.0177px" class="rt" id="t30">20,"Người mua không lấy hóa đơn","","","02/06/2025","1","C25MPP","18","Đã phát hành","THQ07","Trà sen dừa lá nếp",Cốc,1.000000000,"50925.925900000","0.000000000","50925.925900000",8,"4074.000000000","55000.000000000","","","","1R67NL14Q52E71G70U07OCXZ"</div>
<div style="position:absolute;left:29px;top:832px;width:1799px;height:18px;background:#fff"></div>
<div style="position:absolute;left:31px;top:834px;white-space:pre;color:#000;font-size:14.47px;line-height:17px;letter-spacing:-0.0343px" class="rt" id="t31">21,"Người mua không lấy hóa đơn","","","02/06/2025","1","C25MPP","19","Đã phát hành","DUAXIEM02","Dừa Xiêm",Cốc,1.000000000,"46296.296300000","0.000000000","46296.296300000",8,"3704.000000000","50000.000000000","","","","1R67NL14Q52E71G6YTE6H4J0"</div>
<div style="position:absolute;left:29px;top:851px;width:1799px;height:18px;background:#fff"></div>
<div style="position:absolute;left:31px;top:853px;white-space:pre;color:#000;font-size:14.47px;line-height:17px;letter-spacing:-0.0237px" class="rt" id="t32">22,"Người mua không lấy hóa đơn","","","02/06/2025","1","C25MPP","20","Đã phát hành","DUAXIEM02","Dừa Xiêm",Cốc,1.000000000,"46296.296300000","0.000000000","46296.296300000",8,"3704.000000000","50000.000000000","","","","1R67NL14Q52EPCF3G6KJ70K"</div>
<div style="position:absolute;left:29px;top:870px;width:1871px;height:18px;background:#fff"></div>
<div style="position:absolute;left:31px;top:872px;white-space:pre;color:#000;font-size:14.47px;line-height:17px;letter-spacing:-0.0081px" class="rt" id="t33">23,"Người mua không lấy hóa đơn","","","02/06/2025","1","C25MPP","21","Đã phát hành","ITEM-70LD","Trà cam vàng đào nhài",Cốc,1.000000000,"50925.925900000","0.000000000","50925.925900000",8,"4074.000000000","54999.920000000","","","","1R67NL14Q52E2J8PLVOQUKO"</div>
<div style="position:absolute;left:29px;top:889px;width:1871px;height:18px;background:#fff"></div>
<div style="position:absolute;left:31px;top:891px;white-space:pre;color:#000;font-size:14.47px;line-height:17px;letter-spacing:-0.0104px" class="rt" id="t34">24,"Người mua không lấy hóa đơn","","","02/06/2025","1","C25MPP","21","Đã phát hành","TRASUA003","Matcha kem trứng",Cốc,1.000000000,"55555.555600000","0.000000000","55555.555600000",8,"4445.000000000","60000.070000000","","","","1R67NL14Q52E2J8PLVOQUKO"</div>
<div style="position:absolute;left:29px;top:908px;width:1799px;height:18px;background:#fff"></div>
<div style="position:absolute;left:31px;top:910px;white-space:pre;color:#000;font-size:14.47px;line-height:17px;letter-spacing:-0.0146px" class="rt" id="t35">25,"Người mua không lấy hóa đơn","","","02/06/2025","1","C25MPP","22","Đã phát hành","THQ07","Trà sen dừa lá nếp",Cốc,1.000000000,"50925.925900000","0.000000000","50925.925900000",8,"4074.000000000","55000.000000000","","","","1R67NL14Q52E71G71FBS1MEL"</div>
<div style="position:absolute;left:29px;top:927px;width:1799px;height:18px;background:#fff"></div>
<div style="position:absolute;left:31px;top:929px;white-space:pre;color:#000;font-size:14.47px;line-height:17px;letter-spacing:-0.0286px" class="rt" id="t36">26,"Người mua không lấy hóa đơn","","","02/06/2025","1","C25MPP","23","Đã phát hành","TOLV01","Trà Oolong Lê Vải",Cốc,1.000000000,"50925.925900000","0.000000000","50925.925900000",8,"4074.000000000","55000.000000000","","","","1R67NL14Q52E71G70ALDVIMV"</div>
<div style="position:absolute;left:29px;top:946px;width:1799px;height:18px;background:#fff"></div>
<div style="position:absolute;left:31px;top:948px;white-space:pre;color:#000;font-size:14.47px;line-height:17px;letter-spacing:-0.0210px" class="rt" id="t37">27,"Người mua không lấy hóa đơn","","","02/06/2025","1","C25MPP","24","Đã phát hành","CAFE10","Cà phê muối hội an",Cốc,1.000000000,"46296.296300000","0.000000000","46296.296300000",8,"3704.000000000","50000.000000000","","","","1R67NL14Q52E71G6ZTCQ9IMD"</div>
<div style="position:absolute;left:29px;top:965px;width:1799px;height:18px;background:#fff"></div>
<div style="position:absolute;left:31px;top:967px;white-space:pre;color:#000;font-size:14.47px;line-height:17px;letter-spacing:-0.0401px" class="rt" id="t38">28,"Người mua không lấy hóa đơn","","","02/06/2025","1","C25MPP","25","Đã phát hành","ITEM-VD87","Trà ổi hồng",Cốc,1.000000000,"50925.925900000","0.000000000","50925.925900000",8,"4074.000000000","54999.920000000","","","","1R67NL14Q52E71G6ZI5C9HHM"</div>
<div style="position:absolute;left:29px;top:984px;width:1799px;height:18px;background:#fff"></div>
<div style="position:absolute;left:31px;top:986px;white-space:pre;color:#000;font-size:14.47px;line-height:17px;letter-spacing:-0.0200px" class="rt" id="t39">29,"Người mua không lấy hóa đơn","","","02/06/2025","1","C25MPP","25","Đã phát hành","TOLV01","Trà Oolong Lê Vải",Cốc,1.000000000,"50925.925900000","0.000000000","50925.925900000",8,"4074.000000000","55000.370000000","","","","1R67NL14Q52E71G6ZI5C9HHM"</div>
<div style="position:absolute;left:1898px;top:262px;width:1px;height:728px;background:#a8a8a8"></div>
<div style="position:absolute;left:675px;top:641px;width:74px;height:21px;border:2px solid #217346;box-sizing:border-box"></div>
<div style="position:absolute;left:745px;top:658px;width:5px;height:5px;background:#217346;border:1px solid #fff"></div>
<div style="position:absolute;left:0px;top:990px;width:1920px;height:28px;background:#e6e6e6"></div>
<div style="position:absolute;left:1899px;top:241px;width:21px;height:749px;background:#e6e6e6"></div>
<div style="position:absolute;left:0px;top:990px;width:1899px;height:1px;background:#b8b8b8"></div>
<div style="position:absolute;left:100px;top:990px;width:217px;height:25px;background:#fff;border-bottom:2px solid #217346;border-left:1px solid #c8c8c8;border-right:1px solid #c8c8c8;box-sizing:border-box"></div>
<div style="position:absolute;left:100px;top:995px;width:217px;text-align:center;color:#217346;font-size:12.2px;font-weight:bold;line-height:16px">BCCTBH_20250601_20250630 (2)</div>
<div style="position:absolute;left:0px;top:1018px;width:1920px;height:22px;background:#f3f3f3;border-top:1px solid #d4d4d4;box-sizing:border-box"></div>
<div style="position:absolute;left:7px;top:1022px;white-space:pre;color:#262626;font-size:12px;line-height:14px;letter-spacing:-0.5px">Ready</div>
<div style="position:absolute;left:1886px;top:1022px;white-space:pre;color:#262626;font-size:12px;line-height:14px;letter-spacing:-0.8px">100%</div>
<div style="position:absolute;left:1902px;top:245px;width:14px;height:14px;background:#fff;border:1px solid #c6c6c6;box-sizing:border-box"></div>
<svg style="position:absolute;left:1905px;top:249px;" width="9" height="6" viewBox="0 0 9 6"><path d="M0 5 L4 1 L8 5 Z" fill="#777"/></svg>
<div style="position:absolute;left:1902px;top:259px;width:14px;height:718px;background:#d8d8d8"></div>
<div style="position:absolute;left:1902px;top:261px;width:14px;height:16px;background:#fff;border:1px solid #c6c6c6;box-sizing:border-box"></div>
<div style="position:absolute;left:1902px;top:977px;width:14px;height:14px;background:#fff;border:1px solid #c6c6c6;box-sizing:border-box"></div>
<svg style="position:absolute;left:1905px;top:982px;" width="9" height="6" viewBox="0 0 9 6"><path d="M0 0 L8 0 L4 4 Z" fill="#777"/></svg>
<svg style="position:absolute;left:26px;top:999px;" width="6" height="9" viewBox="0 0 6 9"><path d="M5 0 V8 L1 4 Z" fill="#bdbdbd"/></svg>
<svg style="position:absolute;left:55px;top:999px;" width="6" height="9" viewBox="0 0 6 9"><path d="M1 0 V8 L5 4 Z" fill="#bdbdbd"/></svg>
<svg style="position:absolute;left:349px;top:995px;" width="17" height="17" viewBox="0 0 17 17"><circle cx="8.5" cy="8.5" r="7" fill="none" stroke="#6d6d6d" stroke-width="1.2"/><path d="M8.5 4.5 V12.5 M4.5 8.5 H12.5" stroke="#6d6d6d" stroke-width="1.4"/></svg>
<div style="position:absolute;left:1152px;top:999px;width:2px;height:2px;background:#a0a0a0"></div>
<div style="position:absolute;left:1152px;top:1003px;width:2px;height:2px;background:#a0a0a0"></div>
<div style="position:absolute;left:1152px;top:1007px;width:2px;height:2px;background:#a0a0a0"></div>
<div style="position:absolute;left:1169px;top:997px;width:731px;height:15px;background:#d8d8d8;border:1px solid #c6c6c6;box-sizing:border-box"></div>
<div style="position:absolute;left:1170px;top:998px;width:686px;height:13px;background:#fff"></div>
<div style="position:absolute;left:1184px;top:998px;width:1px;height:13px;background:#a8a8a8"></div>
<svg style="position:absolute;left:1173px;top:1000px;" width="6" height="9" viewBox="0 0 6 9"><path d="M5 0 V8 L1 4 Z" fill="#777"/></svg>
<div style="position:absolute;left:1884px;top:998px;width:15px;height:13px;background:#fff;border-left:1px solid #c6c6c6;box-sizing:border-box"></div>
<svg style="position:absolute;left:1889px;top:1000px;" width="6" height="9" viewBox="0 0 6 9"><path d="M1 0 V8 L5 4 Z" fill="#777"/></svg>
<div style="position:absolute;left:1620px;top:1019px;width:40px;height:21px;background:#c8c8c8"></div>
<svg style="position:absolute;left:1633px;top:1022px;" width="14" height="14" viewBox="0 0 14 14"><path d="M0.5 0.5 H13.5 V13.5 H0.5 Z M0.5 4.8 H13.5 M0.5 9.2 H13.5 M4.8 0.5 V13.5 M9.2 0.5 V13.5" stroke="#666" stroke-width="1.1" fill="none"/></svg>
<svg style="position:absolute;left:1673px;top:1022px;" width="15" height="14" viewBox="0 0 15 14"><rect x="0.5" y="0.5" width="13" height="12.5" fill="none" stroke="#666"/><rect x="3.5" y="3" width="7" height="7.5" fill="none" stroke="#666"/><path d="M5 5 H9 M5 7 H9 M5 9 H9" stroke="#666" stroke-width="0.8"/></svg>
<svg style="position:absolute;left:1713px;top:1022px;" width="15" height="14" viewBox="0 0 15 14"><rect x="0.5" y="0.5" width="13" height="12.5" fill="none" stroke="#666"/><path d="M0.5 7.5 H13.5 M6.5 0.5 V7.5" stroke="#666" fill="none"/></svg>
<div style="position:absolute;left:1746px;top:1028px;width:8px;height:1px;background:#555"></div>
<div style="position:absolute;left:1760px;top:1028px;width:99px;height:1px;background:#b8b8b8"></div>
<div style="position:absolute;left:1807px;top:1024px;width:5px;height:10px;background:#6a6a6a"></div>
<svg style="position:absolute;left:1864px;top:1024px;" width="9" height="9" viewBox="0 0 9 9"><path d="M4.5 0 V9 M0 4.5 H9" stroke="#555" stroke-width="1.1"/></svg>
<div style="position:absolute;left:0px;top:1040px;width:1920px;height:40px;background:linear-gradient(90deg,#3e2a2d 0%,#3c2e30 5%,#3a3535 10%,#3d3d3d 18%,#464646 31%,#4a4a4a 52%,#4a4a4a 67%,#4a3838 71%,#4a3434 83%,#473434 100%)"></div>
<div style="position:absolute;left:637px;top:1040px;width:44px;height:40px;background:#5e5e5e"></div>
<div style="position:absolute;left:682px;top:1046px;width:1px;height:28px;background:#555"></div>
<div style="position:absolute;left:249px;top:1078px;width:40px;height:2px;background:#8cb8e0"></div>
<div style="position:absolute;left:396px;top:1078px;width:40px;height:2px;background:#8cb8e0"></div>
<div style="position:absolute;left:445px;top:1078px;width:39px;height:2px;background:#8cb8e0"></div>
<div style="position:absolute;left:494px;top:1078px;width:40px;height:2px;background:#8cb8e0"></div>
<div style="position:absolute;left:544px;top:1078px;width:39px;height:2px;background:#8cb8e0"></div>
<div style="position:absolute;left:592px;top:1078px;width:40px;height:2px;background:#8cb8e0"></div>
<div style="position:absolute;left:637px;top:1078px;width:44px;height:2px;background:#8cb8e0"></div>
<div style="position:absolute;left:690px;top:1078px;width:40px;height:2px;background:#8cb8e0"></div>
<div style="position:absolute;left:739px;top:1078px;width:40px;height:2px;background:#8cb8e0"></div>
<div style="position:absolute;left:788px;top:1078px;width:40px;height:2px;background:#8cb8e0"></div>
<svg style="position:absolute;left:16px;top:1052px;" width="17" height="17" viewBox="0 0 17 17"><path d="M0 2.3 L6.9 1.3 V7.9 H0 Z M7.9 1.2 L17 0 V7.9 H7.9 Z M0 8.9 H6.9 V15.6 L0 14.7 Z M7.9 8.9 H17 V17 L7.9 15.8 Z" fill="#fff"/></svg>
<svg style="position:absolute;left:60px;top:1048px;" width="24" height="24" viewBox="0 0 24 24"><circle cx="14" cy="9.5" r="7.5" fill="none" stroke="#fff" stroke-width="1.8"/><path d="M8.6 15 L2 21.6" stroke="#fff" stroke-width="2" stroke-linecap="round"/></svg>
<svg style="position:absolute;left:111px;top:1051px;" width="18" height="18" viewBox="0 0 18 18"><rect x="1.5" y="4.5" width="11" height="8" fill="none" stroke="#fff" stroke-width="1.2"/><path d="M1 1 H13 M1 16.5 H13 M15.5 1 V4 M15.5 6 V16.5" stroke="#fff" stroke-width="1.2"/><rect x="14.5" y="4.5" width="2" height="2" fill="#fff"/></svg>
<svg style="position:absolute;left:159px;top:1048px;" width="25" height="24" viewBox="0 0 25 24"><defs><linearGradient id="cpa" x1="0" y1="0" x2="0" y2="1"><stop offset="0" stop-color="#2aa8f2"/><stop offset="0.55" stop-color="#7ad04a"/><stop offset="1" stop-color="#f0d020"/></linearGradient><linearGradient id="cpb" x1="0" y1="0" x2="0" y2="1"><stop offset="0" stop-color="#b050f0"/><stop offset="0.5" stop-color="#f04a90"/><stop offset="1" stop-color="#ff9a50"/></linearGradient></defs><path d="M3.5 2.5 Q4.2 1 6 1 H12.5 Q14.2 1 13.8 2.8 L10.5 14.5 Q10 16 8.3 16 H2.3 Q0.6 16 1 14.3 Z" fill="url(#cpa)"/><path d="M12 3 Q12.5 1.5 14 2 L13 6 Z" fill="#3050d0"/><path d="M11.5 9 Q12.2 7.5 14 7.5 H21.5 Q23.5 7.5 23 9.5 L19.8 20.5 Q19.3 22.5 17.5 22.5 H8 Q6 22.5 6.6 20.5 Z" fill="url(#cpb)"/></svg>
<svg style="position:absolute;left:207px;top:1047px;" width="26" height="26" viewBox="0 0 26 26"><defs><linearGradient id="edb" x1="0" y1="0" x2="0.3" y2="1"><stop offset="0" stop-color="#35b8f0"/><stop offset="1" stop-color="#1450b0"/></linearGradient><linearGradient id="edg" x1="0" y1="0" x2="1" y2="0.6"><stop offset="0" stop-color="#20a0e0"/><stop offset="1" stop-color="#60e070"/></linearGradient></defs><circle cx="13" cy="13" r="12" fill="url(#edb)"/><path d="M2 11 Q4 1 13 1 Q24 1 25 13 Q24 17 20 17 H15 Q17 13 13 11 Q8 10 6 14 Z" fill="url(#edg)"/><ellipse cx="13.5" cy="14" rx="3.2" ry="3.6" fill="#2a3440"/><path d="M17 17.5 H25 Q23.5 23 19 25 Q21 21 17 17.5 Z" fill="#3b3838"/></svg>
<svg style="position:absolute;left:258px;top:1050px;" width="22" height="18" viewBox="0 0 22 18"><path d="M0 1 H8 L10 3 H21 V17 H0 Z" fill="#f0c640"/><rect x="0" y="5" width="21" height="12" fill="#ffd95a"/><rect x="5" y="11" width="11" height="6" fill="#3a8ed0"/><rect x="8" y="14" width="5" height="3" fill="#ffd95a"/></svg>
<svg style="position:absolute;left:305px;top:1047px;" width="25" height="25" viewBox="0 0 25 25"><defs><radialGradient id="ff" cx="0.5" cy="0.8" r="0.8"><stop offset="0" stop-color="#ff3b5c"/><stop offset="0.6" stop-color="#ff7a1a"/><stop offset="1" stop-color="#ffd43a"/></radialGradient></defs><circle cx="12.5" cy="14" r="11" fill="url(#ff)"/><path d="M14 1 Q24 6 23 15 L18 9 Z" fill="#ffcf3a"/><circle cx="12" cy="13" r="5.5" fill="#7a3ad8"/></svg>
<svg style="position:absolute;left:354px;top:1047px;" width="25" height="25" viewBox="0 0 25 25"><circle cx="12" cy="13.5" r="11" fill="#8cc63f" stroke="#fff" stroke-width="1.2"/><circle cx="12" cy="13.5" r="6" fill="none" stroke="#fff" stroke-width="1.5"/><circle cx="12" cy="13.5" r="3" fill="#6aa82c"/><path d="M15 1 L22 5 L24 0 Z" fill="#3b3b3b"/><path d="M14 2 L15 7 M19 3 L17 8 M23 8 L19 10" stroke="#e0392a" stroke-width="1.3"/></svg>
<svg style="position:absolute;left:404px;top:1047px;" width="26" height="26" viewBox="0 0 26 26"><circle cx="12.5" cy="12.5" r="12" fill="#db4437"/><path d="M12.5 12.5 L2.1 6.5 A12 12 0 0 0 12.5 24.5 Z" fill="#0f9d58"/><path d="M12.5 12.5 L12.5 24.5 A12 12 0 0 0 22.9 6.5 Z" fill="#f4b400"/><path d="M12.5 12.5 L2.1 6.5 A12 12 0 0 1 22.9 6.5 Z" fill="#db4437"/><circle cx="12.5" cy="12.5" r="5.5" fill="#fff"/><circle cx="12.5" cy="12.5" r="4.3" fill="#4285f4"/></svg>
<svg style="position:absolute;left:413px;top:1058px;" width="16" height="14" viewBox="0 0 16 14"><rect x="2" y="2" width="4" height="4" fill="#2a7"/><rect x="8" y="6" width="4" height="4" fill="#b33"/><rect x="4" y="9" width="4" height="4" fill="#fc3"/><rect x="10" y="1" width="4" height="4" fill="#39f"/></svg>
<svg style="position:absolute;left:451px;top:1048px;" width="27" height="24" viewBox="0 0 27 24"><rect x="8" y="1" width="18" height="22" fill="#1f6fc4"/><path d="M8 1 H26 V7 H8 Z" fill="#50a6ec"/><path d="M14 7 H26 V14 H14 Z" fill="#2b88d8"/><rect x="1" y="6" width="13" height="13" fill="#0b57a8"/><circle cx="7.5" cy="12.5" r="3.8" fill="none" stroke="#fff" stroke-width="1.8"/></svg>
<svg style="position:absolute;left:502px;top:1047px;" width="26" height="26" viewBox="0 0 26 26"><circle cx="12.5" cy="12.5" r="12" fill="#db4437"/><path d="M12.5 12.5 L2.1 6.5 A12 12 0 0 0 12.5 24.5 Z" fill="#0f9d58"/><path d="M12.5 12.5 L12.5 24.5 A12 12 0 0 0 22.9 6.5 Z" fill="#f4b400"/><path d="M12.5 12.5 L2.1 6.5 A12 12 0 0 1 22.9 6.5 Z" fill="#db4437"/><circle cx="12.5" cy="12.5" r="5.5" fill="#fff"/><circle cx="12.5" cy="12.5" r="4.3" fill="#4285f4"/><circle cx="18" cy="18" r="7" fill="#3b4658"/><text x="18" y="22" text-anchor="middle" font-size="9" font-family="Liberation Sans" fill="#fff">N</text></svg>
<svg style="position:absolute;left:551px;top:1047px;" width="26" height="26" viewBox="0 0 26 26"><circle cx="12.5" cy="12.5" r="12" fill="#db4437"/><path d="M12.5 12.5 L2.1 6.5 A12 12 0 0 0 12.5 24.5 Z" fill="#0f9d58"/><path d="M12.5 12.5 L12.5 24.5 A12 12 0 0 0 22.9 6.5 Z" fill="#f4b400"/><path d="M12.5 12.5 L2.1 6.5 A12 12 0 0 1 22.9 6.5 Z" fill="#db4437"/><circle cx="12.5" cy="12.5" r="5.5" fill="#fff"/><circle cx="12.5" cy="12.5" r="4.3" fill="#4285f4"/><circle cx="18" cy="18" r="7" fill="#6a2a2a"/><text x="18" y="22" text-anchor="middle" font-size="9" font-family="Liberation Sans" fill="#fff">A</text></svg>
<svg style="position:absolute;left:600px;top:1047px;" width="25" height="25" viewBox="0 0 25 25"><circle cx="12.5" cy="12.5" r="12" fill="#3b7fd6"/><rect x="6" y="7" width="13" height="9" fill="#fff"/><path d="M7 15 L18 8" stroke="#3b7fd6" stroke-width="1"/><path d="M9 19 H16 M12.5 16 V19" stroke="#fff" stroke-width="1.3"/></svg>
<svg style="position:absolute;left:649px;top:1048px;" width="25" height="24" viewBox="0 0 25 24"><rect x="8" y="1" width="16" height="22" rx="1" fill="#21a366"/><rect x="8" y="1" width="16" height="7" fill="#33c481"/><rect x="8" y="15" width="16" height="8" fill="#107c41"/><rect x="1" y="6" width="13" height="13" rx="1" fill="#185c37"/><text x="7.5" y="16.5" text-anchor="middle" font-size="10" font-weight="bold" font-family="Liberation Sans" fill="#fff">X</text></svg>
<svg style="position:absolute;left:698px;top:1048px;" width="25" height="25" viewBox="0 0 25 25"><path d="M0 0 H19 L24 5 V24 H0 Z" fill="#f68b1f"/><path d="M19 0 V5 H24 Z" fill="#7a4a1a"/><circle cx="12" cy="10" r="5.5" fill="none" stroke="#fff" stroke-width="2.5"/><text x="12" y="22" text-anchor="middle" font-size="5" font-family="Liberation Sans" font-weight="bold" fill="#fff">PDF</text></svg>
<svg style="position:absolute;left:747px;top:1048px;" width="25" height="24" viewBox="0 0 25 24"><rect x="8" y="1" width="16" height="22" rx="1" fill="#2b7cd3"/><rect x="8" y="1" width="16" height="6" fill="#41a5ee"/><rect x="8" y="16" width="16" height="7" fill="#185abd"/><rect x="1" y="6" width="13" height="13" rx="1" fill="#185abd"/><text x="7.5" y="16.5" text-anchor="middle" font-size="10" font-weight="bold" font-family="Liberation Sans" fill="#fff">W</text></svg>
<svg style="position:absolute;left:795px;top:1047px;" width="26" height="26" viewBox="0 0 26 26"><path d="M13 1 Q25 1 25 12 Q25 23 13 23 H4 Q2 23 2 21 L3 17 Q1 15 1 12 Q1 1 13 1 Z" fill="#fff" stroke="#2a6cd8" stroke-width="1.5"/><text x="13" y="15" text-anchor="middle" font-size="8" font-weight="bold" font-family="Liberation Sans" fill="#2a5cb8">Zalo</text></svg>
<svg style="position:absolute;left:1670px;top:1055px;" width="14" height="9" viewBox="0 0 14 9"><path d="M1 8 L7 2 L13 8" stroke="#fff" stroke-width="1.2" fill="none"/></svg>
<svg style="position:absolute;left:1694px;top:1053px;" width="15" height="16" viewBox="0 0 15 16"><rect x="2" y="4" width="8" height="8" rx="1" fill="none" stroke="#fff" stroke-width="1.1"/><path d="M10 6 L13 4 V12 L10 10" stroke="#fff" stroke-width="1.1" fill="none"/><path d="M3 1 Q7 0 10 1 M3 15 Q7 16 10 15" stroke="#fff" stroke-width="0.9" fill="none"/></svg>
<svg style="position:absolute;left:1716px;top:1053px;" width="16" height="14" viewBox="0 0 16 14"><path d="M1 5 H4 L8 1.5 V12.5 L4 9 H1 Z" fill="none" stroke="#fff" stroke-width="1.1"/><path d="M10 5 L14 9 M14 5 L10 9" stroke="#fff" stroke-width="1.1"/></svg>
<svg style="position:absolute;left:1740px;top:1053px;" width="18" height="15" viewBox="0 0 18 15"><rect x="4.5" y="1.5" width="13" height="9" fill="none" stroke="#fff" stroke-width="1.1"/><path d="M11 10.5 V13.5 M7 13.5 H15 M0.5 3 V9 H4" stroke="#fff" stroke-width="1.1" fill="none"/></svg>
<div style="position:absolute;left:1767px;top:1053px;white-space:pre;color:#fff;font-size:12px;line-height:14px;letter-spacing:-0.4px">ENG</div>
<div style="position:absolute;left:1811px;top:1043px;white-space:pre;color:#fff;font-size:12px;line-height:14px;letter-spacing:-0.5px">4:05 CH</div>
<div style="position:absolute;left:1804px;top:1061px;white-space:pre;color:#fff;font-size:12px;line-height:14px;letter-spacing:-0.3px">19/06/2025</div>
<svg style="position:absolute;left:1878px;top:1051px;" width="26" height="26" viewBox="0 0 26 26"><path d="M1.5 1.5 H17.5 V12.5 H8 L4 16 V12.5 H1.5 Z" fill="none" stroke="#fff" stroke-width="1.2"/><path d="M4.5 5 H14.5 M4.5 8 H14.5" stroke="#fff" stroke-width="1.1"/><circle cx="16.5" cy="16" r="7.5" fill="#3a3333" stroke="#fff" stroke-width="1"/><text x="16.5" y="20" text-anchor="middle" font-size="11" font-family="Liberation Sans" fill="#fff">6</text></svg>
<div style="position:absolute;left:1916px;top:1040px;width:1px;height:40px;background:#777"></div>
</body></html>
